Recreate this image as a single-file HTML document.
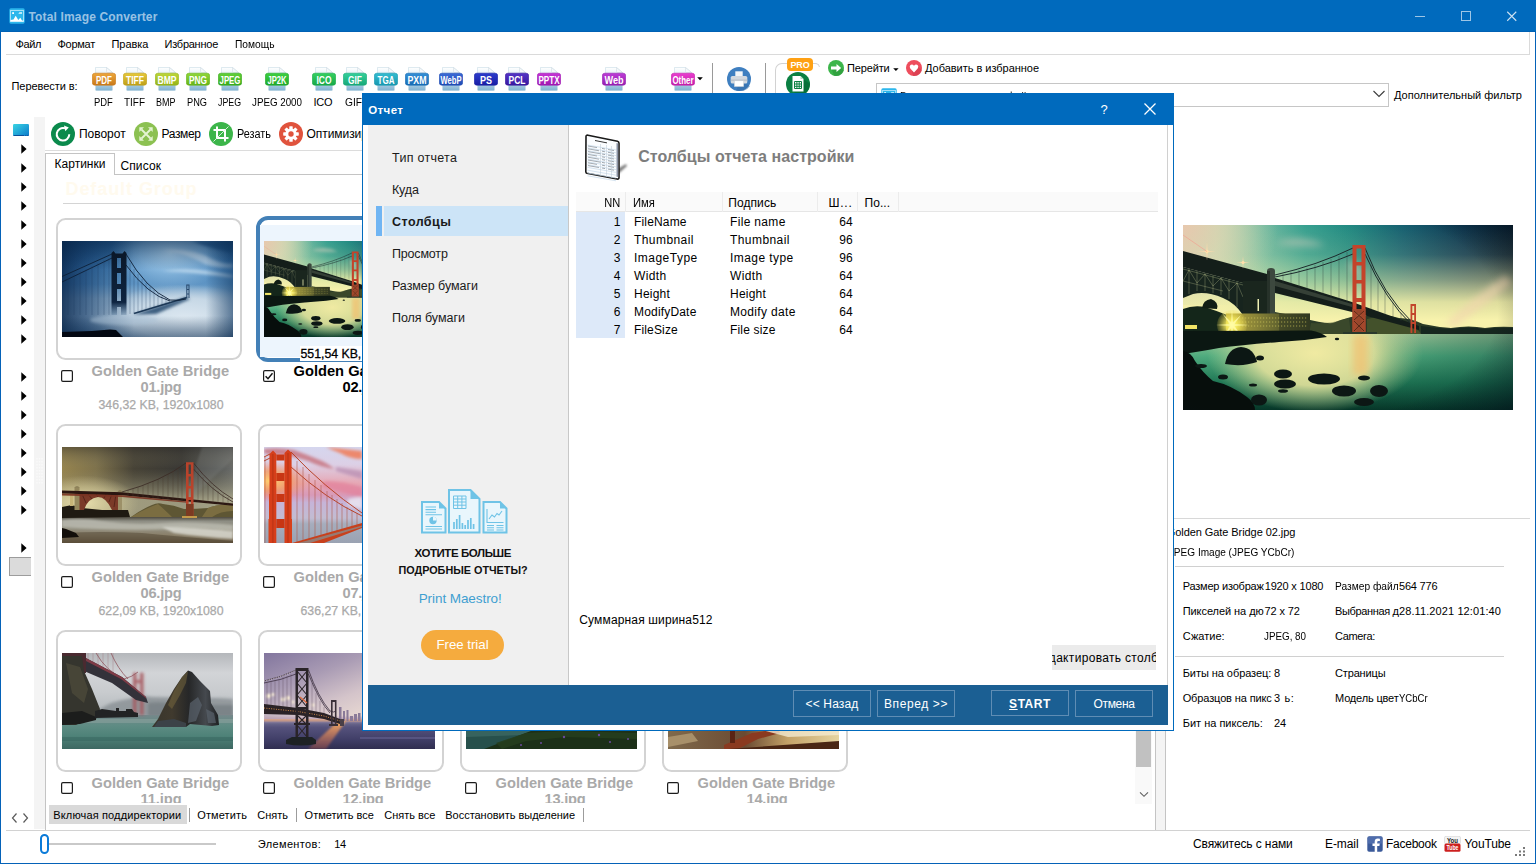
<!DOCTYPE html>
<html lang="ru"><head><meta charset="utf-8"><title>Total Image Converter</title>
<style>
html,body{margin:0;padding:0}
body{width:1536px;height:864px;overflow:hidden;background:#fff;position:relative;font-family:'Liberation Sans', sans-serif;font-size:11px;color:#000}
div,span.t,svg{position:absolute}
div{box-sizing:border-box}
span.t{white-space:nowrap}
svg text{font-family:'Liberation Sans', sans-serif}
</style></head><body>
<div style="left:0px;top:0px;width:1536px;height:32px;background:#006abd;"></div>
<div style="left:0px;top:31px;width:1536px;height:1px;background:#0061b4;"></div>
<div style="left:0px;top:32px;width:1px;height:832px;background:#0462b8;"></div>
<div style="left:1535px;top:32px;width:1px;height:832px;background:#0462b8;"></div>
<div style="left:0px;top:863px;width:1536px;height:1px;background:#0462b8;"></div>
<svg style="left:9px;top:8px" width="16" height="16" viewBox="0 0 16 16"><rect x=".3" y=".3" width="15.400" height="15.400" rx="1.600" fill="#2db7ec"/><rect x="1.500" y="2.500" width="13" height="11" fill="none" stroke="#a6dff6" stroke-width="1"/><path d="M1.500 13.500 V12 L4.500 11.500 L6.700 7.700 L9.300 12 L11.300 9.800 L13.200 12.800 L14.500 12 V13.500Z" fill="#fff"/><rect x="3.200" y="4.200" width="1.800" height="1.800" fill="#fff"/><path d="M9.300 5.800 L10.500 4.300 H13 V5.800Z" fill="#e6f6fd"/></svg>
<span class="t" style="top:8.5px;font-size:12px;line-height:16px;left:28.5px;font-weight:bold;color:rgba(255,255,255,.6);letter-spacing:0.152px;">Total Image Converter</span>
<svg style="left:1409px;top:6px" width="116" height="20" viewBox="0 0 116 20"><g stroke="#fff" stroke-opacity=".8" fill="none"><path d="M6 10.500 H16" stroke-width="1" stroke-opacity=".62"/><rect x="52.500" y="5.500" width="9" height="9" stroke-width="1" stroke-opacity=".62"/><path d="M98.250 5.750 L107.250 14.750 M107.250 5.750 L98.250 14.750" stroke-width="1.100"/></g></svg>
<span class="t" style="top:36.3px;font-size:11px;line-height:16px;left:15.5px;letter-spacing:-0.387px;">Файл</span>
<span class="t" style="top:36.3px;font-size:11px;line-height:16px;left:57.5px;letter-spacing:-0.263px;">Формат</span>
<span class="t" style="top:36.3px;font-size:11px;line-height:16px;left:111.5px;letter-spacing:-0.062px;">Правка</span>
<span class="t" style="top:36.3px;font-size:11px;line-height:16px;left:164.5px;letter-spacing:-0.25px;">Избранное</span>
<span class="t" style="top:36.3px;font-size:11px;line-height:16px;left:234.5px;transform:scaleX(0.9294);transform-origin:left center;">Помощь</span>
<div style="left:6px;top:54px;width:1524px;height:1px;background:#dadada;"></div>
<div style="left:1529px;top:32px;width:1px;height:23px;background:#dadada;"></div>
<span class="t" style="top:78.2px;font-size:11px;line-height:16px;left:11.5px;letter-spacing:-0.062px;">Перевести в:</span>
<svg style="left:92px;top:67px" width="24" height="24" viewBox="0 0 24 24"><defs><linearGradient id="f0p" x1="0" y1="0" x2="0" y2="1"><stop offset="0" stop-color="#ffffff"/><stop offset=".45" stop-color="#d6e8f2"/><stop offset="1" stop-color="#7fb2d2"/></linearGradient><linearGradient id="f0b" x1="0" y1="0" x2="0" y2="1"><stop offset="0" stop-color="#eda63a"/><stop offset="1" stop-color="#c9791a"/></linearGradient></defs><path d="M3.500 .500 H14.500 L20.500 5.500 V22.500 Q20.500 23.700 19.300 23.700 H4.700 Q3.500 23.700 3.500 22.500Z" fill="url(#f0p)" stroke="#c8dbe6" stroke-width=".6"/><path d="M14.500 .500 L20.500 5.500 H15.500 Q14.500 5.500 14.500 4.500Z" fill="#f4f7fa" stroke="#c9d6de" stroke-width=".5"/><rect x=".300" y="6.200" width="23.400" height="12" rx="2.600" fill="url(#f0b)" stroke="#c9791a" stroke-width=".6"/><text x="12" y="16.700" text-anchor="middle" font-size="11" font-weight="bold" fill="#fff" textLength="16" lengthAdjust="spacingAndGlyphs">PDF</text></svg>
<span class="t" style="top:94.0px;font-size:11px;line-height:16px;left:93.7px;transform:scaleX(0.8545);transform-origin:left center;">PDF</span>
<svg style="left:123px;top:67px" width="24" height="24" viewBox="0 0 24 24"><defs><linearGradient id="f1p" x1="0" y1="0" x2="0" y2="1"><stop offset="0" stop-color="#ffffff"/><stop offset=".45" stop-color="#d6e8f2"/><stop offset="1" stop-color="#7fb2d2"/></linearGradient><linearGradient id="f1b" x1="0" y1="0" x2="0" y2="1"><stop offset="0" stop-color="#e6c83a"/><stop offset="1" stop-color="#bf9f18"/></linearGradient></defs><path d="M3.500 .500 H14.500 L20.500 5.500 V22.500 Q20.500 23.700 19.300 23.700 H4.700 Q3.500 23.700 3.500 22.500Z" fill="url(#f1p)" stroke="#c8dbe6" stroke-width=".6"/><path d="M14.500 .500 L20.500 5.500 H15.500 Q14.500 5.500 14.500 4.500Z" fill="#f4f7fa" stroke="#c9d6de" stroke-width=".5"/><rect x=".300" y="6.200" width="23.400" height="12" rx="2.600" fill="url(#f1b)" stroke="#bf9f18" stroke-width=".6"/><text x="12" y="16.700" text-anchor="middle" font-size="11" font-weight="bold" fill="#fff" textLength="18" lengthAdjust="spacingAndGlyphs">TIFF</text></svg>
<span class="t" style="top:94.0px;font-size:11px;line-height:16px;left:124px;transform:scaleX(0.9044);transform-origin:left center;">TIFF</span>
<svg style="left:155px;top:67px" width="24" height="24" viewBox="0 0 24 24"><defs><linearGradient id="f2p" x1="0" y1="0" x2="0" y2="1"><stop offset="0" stop-color="#ffffff"/><stop offset=".45" stop-color="#d6e8f2"/><stop offset="1" stop-color="#7fb2d2"/></linearGradient><linearGradient id="f2b" x1="0" y1="0" x2="0" y2="1"><stop offset="0" stop-color="#bdd63a"/><stop offset="1" stop-color="#96b418"/></linearGradient></defs><path d="M3.500 .500 H14.500 L20.500 5.500 V22.500 Q20.500 23.700 19.300 23.700 H4.700 Q3.500 23.700 3.500 22.500Z" fill="url(#f2p)" stroke="#c8dbe6" stroke-width=".6"/><path d="M14.500 .500 L20.500 5.500 H15.500 Q14.500 5.500 14.500 4.500Z" fill="#f4f7fa" stroke="#c9d6de" stroke-width=".5"/><rect x=".300" y="6.200" width="23.400" height="12" rx="2.600" fill="url(#f2b)" stroke="#96b418" stroke-width=".6"/><text x="12" y="16.700" text-anchor="middle" font-size="11" font-weight="bold" fill="#fff" textLength="19" lengthAdjust="spacingAndGlyphs">BMP</text></svg>
<span class="t" style="top:94.0px;font-size:11px;line-height:16px;left:155.5px;transform:scaleX(0.8178);transform-origin:left center;">BMP</span>
<svg style="left:186px;top:67px" width="24" height="24" viewBox="0 0 24 24"><defs><linearGradient id="f3p" x1="0" y1="0" x2="0" y2="1"><stop offset="0" stop-color="#ffffff"/><stop offset=".45" stop-color="#d6e8f2"/><stop offset="1" stop-color="#7fb2d2"/></linearGradient><linearGradient id="f3b" x1="0" y1="0" x2="0" y2="1"><stop offset="0" stop-color="#8fd63a"/><stop offset="1" stop-color="#66b418"/></linearGradient></defs><path d="M3.500 .500 H14.500 L20.500 5.500 V22.500 Q20.500 23.700 19.300 23.700 H4.700 Q3.500 23.700 3.500 22.500Z" fill="url(#f3p)" stroke="#c8dbe6" stroke-width=".6"/><path d="M14.500 .500 L20.500 5.500 H15.500 Q14.500 5.500 14.500 4.500Z" fill="#f4f7fa" stroke="#c9d6de" stroke-width=".5"/><rect x=".300" y="6.200" width="23.400" height="12" rx="2.600" fill="url(#f3b)" stroke="#66b418" stroke-width=".6"/><text x="12" y="16.700" text-anchor="middle" font-size="11" font-weight="bold" fill="#fff" textLength="18" lengthAdjust="spacingAndGlyphs">PNG</text></svg>
<span class="t" style="top:94.0px;font-size:11px;line-height:16px;left:186.5px;transform:scaleX(0.8388);transform-origin:left center;">PNG</span>
<svg style="left:218px;top:67px" width="24" height="24" viewBox="0 0 24 24"><defs><linearGradient id="f4p" x1="0" y1="0" x2="0" y2="1"><stop offset="0" stop-color="#ffffff"/><stop offset=".45" stop-color="#d6e8f2"/><stop offset="1" stop-color="#7fb2d2"/></linearGradient><linearGradient id="f4b" x1="0" y1="0" x2="0" y2="1"><stop offset="0" stop-color="#62d03a"/><stop offset="1" stop-color="#38aa1c"/></linearGradient></defs><path d="M3.500 .500 H14.500 L20.500 5.500 V22.500 Q20.500 23.700 19.300 23.700 H4.700 Q3.500 23.700 3.500 22.500Z" fill="url(#f4p)" stroke="#c8dbe6" stroke-width=".6"/><path d="M14.500 .500 L20.500 5.500 H15.500 Q14.500 5.500 14.500 4.500Z" fill="#f4f7fa" stroke="#c9d6de" stroke-width=".5"/><rect x=".300" y="6.200" width="23.400" height="12" rx="2.600" fill="url(#f4b)" stroke="#38aa1c" stroke-width=".6"/><text x="12" y="16.700" text-anchor="middle" font-size="11" font-weight="bold" fill="#fff" textLength="21" lengthAdjust="spacingAndGlyphs">JPEG</text></svg>
<span class="t" style="top:94.0px;font-size:11px;line-height:16px;left:218px;transform:scaleX(0.8004);transform-origin:left center;">JPEG</span>
<svg style="left:265px;top:67px" width="24" height="24" viewBox="0 0 24 24"><defs><linearGradient id="f5p" x1="0" y1="0" x2="0" y2="1"><stop offset="0" stop-color="#ffffff"/><stop offset=".45" stop-color="#d6e8f2"/><stop offset="1" stop-color="#7fb2d2"/></linearGradient><linearGradient id="f5b" x1="0" y1="0" x2="0" y2="1"><stop offset="0" stop-color="#3ed040"/><stop offset="1" stop-color="#1fa82c"/></linearGradient></defs><path d="M3.500 .500 H14.500 L20.500 5.500 V22.500 Q20.500 23.700 19.300 23.700 H4.700 Q3.500 23.700 3.500 22.500Z" fill="url(#f5p)" stroke="#c8dbe6" stroke-width=".6"/><path d="M14.500 .500 L20.500 5.500 H15.500 Q14.500 5.500 14.500 4.500Z" fill="#f4f7fa" stroke="#c9d6de" stroke-width=".5"/><rect x=".300" y="6.200" width="23.400" height="12" rx="2.600" fill="url(#f5b)" stroke="#1fa82c" stroke-width=".6"/><text x="12" y="16.700" text-anchor="middle" font-size="11" font-weight="bold" fill="#fff" textLength="19" lengthAdjust="spacingAndGlyphs">JP2K</text></svg>
<span class="t" style="top:94.0px;font-size:11px;line-height:16px;left:252px;transform:scaleX(0.8886);transform-origin:left center;">JPEG 2000</span>
<svg style="left:312px;top:67px" width="24" height="24" viewBox="0 0 24 24"><defs><linearGradient id="f6p" x1="0" y1="0" x2="0" y2="1"><stop offset="0" stop-color="#ffffff"/><stop offset=".45" stop-color="#d6e8f2"/><stop offset="1" stop-color="#7fb2d2"/></linearGradient><linearGradient id="f6b" x1="0" y1="0" x2="0" y2="1"><stop offset="0" stop-color="#34d060"/><stop offset="1" stop-color="#18a848"/></linearGradient></defs><path d="M3.500 .500 H14.500 L20.500 5.500 V22.500 Q20.500 23.700 19.300 23.700 H4.700 Q3.500 23.700 3.500 22.500Z" fill="url(#f6p)" stroke="#c8dbe6" stroke-width=".6"/><path d="M14.500 .500 L20.500 5.500 H15.500 Q14.500 5.500 14.500 4.500Z" fill="#f4f7fa" stroke="#c9d6de" stroke-width=".5"/><rect x=".300" y="6.200" width="23.400" height="12" rx="2.600" fill="url(#f6b)" stroke="#18a848" stroke-width=".6"/><text x="12" y="16.700" text-anchor="middle" font-size="11" font-weight="bold" fill="#fff" textLength="15" lengthAdjust="spacingAndGlyphs">ICO</text></svg>
<span class="t" style="top:94.0px;font-size:11px;line-height:16px;left:313.5px;letter-spacing:-0.188px;">ICO</span>
<svg style="left:343px;top:67px" width="24" height="24" viewBox="0 0 24 24"><defs><linearGradient id="f7p" x1="0" y1="0" x2="0" y2="1"><stop offset="0" stop-color="#ffffff"/><stop offset=".45" stop-color="#d6e8f2"/><stop offset="1" stop-color="#7fb2d2"/></linearGradient><linearGradient id="f7b" x1="0" y1="0" x2="0" y2="1"><stop offset="0" stop-color="#34d09a"/><stop offset="1" stop-color="#18a878"/></linearGradient></defs><path d="M3.500 .500 H14.500 L20.500 5.500 V22.500 Q20.500 23.700 19.300 23.700 H4.700 Q3.500 23.700 3.500 22.500Z" fill="url(#f7p)" stroke="#c8dbe6" stroke-width=".6"/><path d="M14.500 .500 L20.500 5.500 H15.500 Q14.500 5.500 14.500 4.500Z" fill="#f4f7fa" stroke="#c9d6de" stroke-width=".5"/><rect x=".300" y="6.200" width="23.400" height="12" rx="2.600" fill="url(#f7b)" stroke="#18a878" stroke-width=".6"/><text x="12" y="16.700" text-anchor="middle" font-size="11" font-weight="bold" fill="#fff" textLength="14" lengthAdjust="spacingAndGlyphs">GIF</text></svg>
<span class="t" style="top:94.0px;font-size:11px;line-height:16px;left:345px;transform:scaleX(0.9267);transform-origin:left center;">GIF</span>
<svg style="left:374px;top:67px" width="24" height="24" viewBox="0 0 24 24"><defs><linearGradient id="f8p" x1="0" y1="0" x2="0" y2="1"><stop offset="0" stop-color="#ffffff"/><stop offset=".45" stop-color="#d6e8f2"/><stop offset="1" stop-color="#7fb2d2"/></linearGradient><linearGradient id="f8b" x1="0" y1="0" x2="0" y2="1"><stop offset="0" stop-color="#34bcd0"/><stop offset="1" stop-color="#1898b0"/></linearGradient></defs><path d="M3.500 .500 H14.500 L20.500 5.500 V22.500 Q20.500 23.700 19.300 23.700 H4.700 Q3.500 23.700 3.500 22.500Z" fill="url(#f8p)" stroke="#c8dbe6" stroke-width=".6"/><path d="M14.500 .500 L20.500 5.500 H15.500 Q14.500 5.500 14.500 4.500Z" fill="#f4f7fa" stroke="#c9d6de" stroke-width=".5"/><rect x=".300" y="6.200" width="23.400" height="12" rx="2.600" fill="url(#f8b)" stroke="#1898b0" stroke-width=".6"/><text x="12" y="16.700" text-anchor="middle" font-size="11" font-weight="bold" fill="#fff" textLength="17" lengthAdjust="spacingAndGlyphs">TGA</text></svg>
<span class="t" style="top:94.0px;font-size:11px;line-height:16px;left:375px;transform:scaleX(0.884);transform-origin:left center;">TGA</span>
<svg style="left:405px;top:67px" width="24" height="24" viewBox="0 0 24 24"><defs><linearGradient id="f9p" x1="0" y1="0" x2="0" y2="1"><stop offset="0" stop-color="#ffffff"/><stop offset=".45" stop-color="#d6e8f2"/><stop offset="1" stop-color="#7fb2d2"/></linearGradient><linearGradient id="f9b" x1="0" y1="0" x2="0" y2="1"><stop offset="0" stop-color="#348fd6"/><stop offset="1" stop-color="#186cb4"/></linearGradient></defs><path d="M3.500 .500 H14.500 L20.500 5.500 V22.500 Q20.500 23.700 19.300 23.700 H4.700 Q3.500 23.700 3.500 22.500Z" fill="url(#f9p)" stroke="#c8dbe6" stroke-width=".6"/><path d="M14.500 .500 L20.500 5.500 H15.500 Q14.500 5.500 14.500 4.500Z" fill="#f4f7fa" stroke="#c9d6de" stroke-width=".5"/><rect x=".300" y="6.200" width="23.400" height="12" rx="2.600" fill="url(#f9b)" stroke="#186cb4" stroke-width=".6"/><text x="12" y="16.700" text-anchor="middle" font-size="11" font-weight="bold" fill="#fff" textLength="19" lengthAdjust="spacingAndGlyphs">PXM</text></svg>
<span class="t" style="top:94.0px;font-size:11px;line-height:16px;left:406px;transform:scaleX(0.8807);transform-origin:left center;">PXM</span>
<svg style="left:439px;top:67px" width="24" height="24" viewBox="0 0 24 24"><defs><linearGradient id="f10p" x1="0" y1="0" x2="0" y2="1"><stop offset="0" stop-color="#ffffff"/><stop offset=".45" stop-color="#d6e8f2"/><stop offset="1" stop-color="#7fb2d2"/></linearGradient><linearGradient id="f10b" x1="0" y1="0" x2="0" y2="1"><stop offset="0" stop-color="#3a6ad6"/><stop offset="1" stop-color="#204cb4"/></linearGradient></defs><path d="M3.500 .500 H14.500 L20.500 5.500 V22.500 Q20.500 23.700 19.300 23.700 H4.700 Q3.500 23.700 3.500 22.500Z" fill="url(#f10p)" stroke="#c8dbe6" stroke-width=".6"/><path d="M14.500 .500 L20.500 5.500 H15.500 Q14.500 5.500 14.500 4.500Z" fill="#f4f7fa" stroke="#c9d6de" stroke-width=".5"/><rect x=".300" y="6.200" width="23.400" height="12" rx="2.600" fill="url(#f10b)" stroke="#204cb4" stroke-width=".6"/><text x="12" y="16.700" text-anchor="middle" font-size="11" font-weight="bold" fill="#fff" textLength="21" lengthAdjust="spacingAndGlyphs">WebP</text></svg>
<span class="t" style="top:94.0px;font-size:11px;line-height:16px;left:438px;transform:scaleX(0.9071);transform-origin:left center;">WebP</span>
<svg style="left:474px;top:67px" width="24" height="24" viewBox="0 0 24 24"><defs><linearGradient id="f11p" x1="0" y1="0" x2="0" y2="1"><stop offset="0" stop-color="#ffffff"/><stop offset=".45" stop-color="#d6e8f2"/><stop offset="1" stop-color="#7fb2d2"/></linearGradient><linearGradient id="f11b" x1="0" y1="0" x2="0" y2="1"><stop offset="0" stop-color="#2c3ccc"/><stop offset="1" stop-color="#181ea4"/></linearGradient></defs><path d="M3.500 .500 H14.500 L20.500 5.500 V22.500 Q20.500 23.700 19.300 23.700 H4.700 Q3.500 23.700 3.500 22.500Z" fill="url(#f11p)" stroke="#c8dbe6" stroke-width=".6"/><path d="M14.500 .500 L20.500 5.500 H15.500 Q14.500 5.500 14.500 4.500Z" fill="#f4f7fa" stroke="#c9d6de" stroke-width=".5"/><rect x=".300" y="6.200" width="23.400" height="12" rx="2.600" fill="url(#f11b)" stroke="#181ea4" stroke-width=".6"/><text x="12" y="16.700" text-anchor="middle" font-size="11" font-weight="bold" fill="#fff" textLength="12" lengthAdjust="spacingAndGlyphs">PS</text></svg>
<span class="t" style="top:94.0px;font-size:11px;line-height:16px;left:480px;transform:scaleX(0.817);transform-origin:left center;">PS</span>
<svg style="left:505px;top:67px" width="24" height="24" viewBox="0 0 24 24"><defs><linearGradient id="f12p" x1="0" y1="0" x2="0" y2="1"><stop offset="0" stop-color="#ffffff"/><stop offset=".45" stop-color="#d6e8f2"/><stop offset="1" stop-color="#7fb2d2"/></linearGradient><linearGradient id="f12b" x1="0" y1="0" x2="0" y2="1"><stop offset="0" stop-color="#5434c6"/><stop offset="1" stop-color="#38189e"/></linearGradient></defs><path d="M3.500 .500 H14.500 L20.500 5.500 V22.500 Q20.500 23.700 19.300 23.700 H4.700 Q3.500 23.700 3.500 22.500Z" fill="url(#f12p)" stroke="#c8dbe6" stroke-width=".6"/><path d="M14.500 .500 L20.500 5.500 H15.500 Q14.500 5.500 14.500 4.500Z" fill="#f4f7fa" stroke="#c9d6de" stroke-width=".5"/><rect x=".300" y="6.200" width="23.400" height="12" rx="2.600" fill="url(#f12b)" stroke="#38189e" stroke-width=".6"/><text x="12" y="16.700" text-anchor="middle" font-size="11" font-weight="bold" fill="#fff" textLength="17" lengthAdjust="spacingAndGlyphs">PCL</text></svg>
<span class="t" style="top:94.0px;font-size:11px;line-height:16px;left:507px;transform:scaleX(0.8876);transform-origin:left center;">PCL</span>
<svg style="left:537px;top:67px" width="24" height="24" viewBox="0 0 24 24"><defs><linearGradient id="f13p" x1="0" y1="0" x2="0" y2="1"><stop offset="0" stop-color="#ffffff"/><stop offset=".45" stop-color="#d6e8f2"/><stop offset="1" stop-color="#7fb2d2"/></linearGradient><linearGradient id="f13b" x1="0" y1="0" x2="0" y2="1"><stop offset="0" stop-color="#c634d6"/><stop offset="1" stop-color="#9e18b0"/></linearGradient></defs><path d="M3.500 .500 H14.500 L20.500 5.500 V22.500 Q20.500 23.700 19.300 23.700 H4.700 Q3.500 23.700 3.500 22.500Z" fill="url(#f13p)" stroke="#c8dbe6" stroke-width=".6"/><path d="M14.500 .500 L20.500 5.500 H15.500 Q14.500 5.500 14.500 4.500Z" fill="#f4f7fa" stroke="#c9d6de" stroke-width=".5"/><rect x=".300" y="6.200" width="23.400" height="12" rx="2.600" fill="url(#f13b)" stroke="#9e18b0" stroke-width=".6"/><text x="12" y="16.700" text-anchor="middle" font-size="11" font-weight="bold" fill="#fff" textLength="21" lengthAdjust="spacingAndGlyphs">PPTX</text></svg>
<span class="t" style="top:94.0px;font-size:11px;line-height:16px;left:537px;transform:scaleX(0.87);transform-origin:left center;">PPTX</span>
<svg style="left:602px;top:67px" width="24" height="24" viewBox="0 0 24 24"><defs><linearGradient id="f14p" x1="0" y1="0" x2="0" y2="1"><stop offset="0" stop-color="#ffffff"/><stop offset=".45" stop-color="#d6e8f2"/><stop offset="1" stop-color="#7fb2d2"/></linearGradient><linearGradient id="f14b" x1="0" y1="0" x2="0" y2="1"><stop offset="0" stop-color="#bc3cd6"/><stop offset="1" stop-color="#9620b0"/></linearGradient></defs><path d="M3.500 .500 H14.500 L20.500 5.500 V22.500 Q20.500 23.700 19.300 23.700 H4.700 Q3.500 23.700 3.500 22.500Z" fill="url(#f14p)" stroke="#c8dbe6" stroke-width=".6"/><path d="M14.500 .500 L20.500 5.500 H15.500 Q14.500 5.500 14.500 4.500Z" fill="#f4f7fa" stroke="#c9d6de" stroke-width=".5"/><rect x=".300" y="6.200" width="23.400" height="12" rx="2.600" fill="url(#f14b)" stroke="#9620b0" stroke-width=".6"/><text x="12" y="16.700" text-anchor="middle" font-size="11" font-weight="bold" fill="#fff" textLength="19" lengthAdjust="spacingAndGlyphs">Web</text></svg>
<span class="t" style="top:94.0px;font-size:11px;line-height:16px;left:604px;transform:scaleX(0.9366);transform-origin:left center;">Web</span>
<svg style="left:671px;top:67px" width="24" height="24" viewBox="0 0 24 24"><defs><linearGradient id="f15p" x1="0" y1="0" x2="0" y2="1"><stop offset="0" stop-color="#ffffff"/><stop offset=".45" stop-color="#d6e8f2"/><stop offset="1" stop-color="#7fb2d2"/></linearGradient><linearGradient id="f15b" x1="0" y1="0" x2="0" y2="1"><stop offset="0" stop-color="#ea3ed0"/><stop offset="1" stop-color="#c21ea8"/></linearGradient></defs><path d="M3.500 .500 H14.500 L20.500 5.500 V22.500 Q20.500 23.700 19.300 23.700 H4.700 Q3.500 23.700 3.500 22.500Z" fill="url(#f15p)" stroke="#c8dbe6" stroke-width=".6"/><path d="M14.500 .500 L20.500 5.500 H15.500 Q14.500 5.500 14.500 4.500Z" fill="#f4f7fa" stroke="#c9d6de" stroke-width=".5"/><rect x=".300" y="6.200" width="23.400" height="12" rx="2.600" fill="url(#f15b)" stroke="#c21ea8" stroke-width=".6"/><text x="12" y="16.700" text-anchor="middle" font-size="11" font-weight="bold" fill="#fff" textLength="21" lengthAdjust="spacingAndGlyphs">Other</text></svg>
<span class="t" style="top:94.0px;font-size:11px;line-height:16px;left:670px;letter-spacing:0.097px;">Other</span>
<svg style="left:697px;top:77px" width="6" height="4" viewBox="0 0 6 4"><path d="M.2 .2 H5.800 L3 3.300Z" fill="#000"/></svg>
<div style="left:712px;top:63px;width:1px;height:40px;background:#9a9a9a;"></div>
<div style="left:765px;top:63px;width:1px;height:40px;background:#9a9a9a;"></div>
<svg style="left:727px;top:67px" width="24" height="24" viewBox="0 0 24 24"><circle cx="12" cy="12" r="12" fill="#3f7fc0"/><path d="M14 14 L23 19 A12 12 0 0 1 9 23.600Z" fill="#346da8" opacity=".55"/><rect x="8.300" y="4.300" width="7.400" height="5.200" fill="#f4f6f8"/><rect x="3.700" y="9" width="16.600" height="7.600" rx="1.600" fill="#d4d9df"/><rect x="3.700" y="12.600" width="16.600" height="1.100" fill="#b4bbc3"/><rect x="7.300" y="13.800" width="9.400" height="5.800" fill="#fff" stroke="#c3c9d0" stroke-width=".5"/></svg>
<div style="left:775px;top:63px;width:45px;height:50px;border:1px solid #d2d2d2;border-radius:7px 5px 0 0;border-bottom:0"></div>
<div style="left:818px;top:67px;width:3px;height:40px;background:#fff;"></div>
<svg style="left:786px;top:72px" width="24" height="24" viewBox="0 0 24 24"><circle cx="12" cy="12" r="12" fill="#0b8043"/><path d="M16 6 L24 12 A12 12 0 0 1 12 24 L7 19Z" fill="#086a36" opacity=".7"/><path d="M6.500 4 H14.500 L17.500 7 V19.500 H6.500Z" fill="#fff"/><path d="M14.500 4 V7 H17.500Z" fill="#b9dcc6"/><path d="M8.500 9.500 H15.500 V16.500 H8.500Z M8.500 12 H15.500 M8.500 14.300 H15.500 M10.900 9.500 V16.500 M13.200 9.500 V16.500" fill="none" stroke="#0b8043" stroke-width="1"/></svg>
<div style="left:787px;top:58px;width:26px;height:13px;background:#ffa114;border-radius:4px"></div>
<span class="t" style="top:58.6px;font-size:9px;line-height:12px;left:800px;font-weight:bold;color:#fff;letter-spacing:-0.172px;transform:translateX(-50%);">PRO</span>
<svg style="left:828px;top:60px" width="16" height="16" viewBox="0 0 16 16"><circle cx="8" cy="8" r="8" fill="#3cb54a"/><path d="M11 6 L16 10 A8 8 0 0 1 6 15.700 L4 10Z" fill="#2c9a3a" opacity=".7"/><path d="M3 6.500 H8.500 V4 L13.200 8 L8.500 12 V9.500 H3Z" fill="#fff"/></svg>
<span class="t" style="top:60.3px;font-size:11px;line-height:16px;left:847px;letter-spacing:-0.142px;">Перейти</span>
<svg style="left:893px;top:67.5px" width="6" height="4" viewBox="0 0 6 4"><path d="M.2 .2 H5.600 L2.900 3.100Z" fill="#000"/></svg>
<svg style="left:906px;top:60px" width="16" height="16" viewBox="0 0 16 16"><circle cx="8" cy="8" r="8" fill="#ee4d5d"/><path d="M11 6 L16 10 A8 8 0 0 1 7 15.900 L6 11Z" fill="#d23a4c" opacity=".6"/><path d="M8 12.600 L4.300 8.600 Q3 6.600 4.400 5.100 Q6.200 3.700 8 5.700 Q9.800 3.700 11.600 5.100 Q13 6.600 11.700 8.600Z" fill="#fff"/></svg>
<span class="t" style="top:60.3px;font-size:11px;line-height:16px;left:925px;letter-spacing:-0.028px;">Добавить в избранное</span>
<span class="t" style="top:88.8px;font-size:11px;line-height:16px;left:828px;letter-spacing:-0.002px;">Фильтр:</span>
<div style="left:876px;top:83px;width:513px;height:24px;border:1px solid #c6c6c6;background:#fff"></div>
<svg style="left:881px;top:88px" width="16" height="16" viewBox="0 0 16 16"><rect x=".3" y=".3" width="15.400" height="15.400" rx="1.600" fill="#2db7ec"/><rect x="1.500" y="2.500" width="13" height="11" fill="none" stroke="#a6dff6" stroke-width="1"/><path d="M1.500 13.500 V12 L4.500 11.500 L6.700 7.700 L9.300 12 L11.300 9.800 L13.200 12.800 L14.500 12 V13.500Z" fill="#fff"/><rect x="3.200" y="4.200" width="1.800" height="1.800" fill="#fff"/><path d="M9.300 5.800 L10.500 4.300 H13 V5.800Z" fill="#e6f6fd"/></svg>
<span class="t" style="top:87.5px;font-size:11px;line-height:16px;left:900px;transform:scaleX(0.9293);transform-origin:left center;">Все поддерживаемые файлы</span>
<svg style="left:1372px;top:90px" width="14" height="8" viewBox="0 0 14 8"><path d="M1.500 1 L7 6.500 L12.500 1" fill="none" stroke="#3c3c3c" stroke-width="1.100"/></svg>
<span class="t" style="top:86.8px;font-size:11px;line-height:16px;left:1394px;letter-spacing:0.009px;">Дополнительный фильтр</span>
<svg style="left:13px;top:124px" width="16" height="12" viewBox="0 0 16 12"><defs><linearGradient id="mon" x1="0" y1="0" x2="1" y2="1"><stop offset="0" stop-color="#3ad4e2"/><stop offset=".5" stop-color="#22a8d8"/><stop offset="1" stop-color="#0c78c8"/></linearGradient></defs><rect x="0" y="0" width="16" height="12" rx="1.200" fill="url(#mon)"/><path d="M.5 11.500 H11 M12.300 11.500 H13.300 M14.300 11.500 H15.500" stroke="#0a4f9a" stroke-width="1"/></svg>
<svg style="left:20.7px;top:143.6px" width="6" height="10" viewBox="0 0 6 10"><path d="M.3 .3 L5.600 5 L.3 9.700Z" fill="#000"/></svg>
<svg style="left:20.7px;top:162.6px" width="6" height="10" viewBox="0 0 6 10"><path d="M.3 .3 L5.600 5 L.3 9.700Z" fill="#000"/></svg>
<svg style="left:20.7px;top:181.6px" width="6" height="10" viewBox="0 0 6 10"><path d="M.3 .3 L5.600 5 L.3 9.700Z" fill="#000"/></svg>
<svg style="left:20.7px;top:200.6px" width="6" height="10" viewBox="0 0 6 10"><path d="M.3 .3 L5.600 5 L.3 9.700Z" fill="#000"/></svg>
<svg style="left:20.7px;top:219.6px" width="6" height="10" viewBox="0 0 6 10"><path d="M.3 .3 L5.600 5 L.3 9.700Z" fill="#000"/></svg>
<svg style="left:20.7px;top:238.6px" width="6" height="10" viewBox="0 0 6 10"><path d="M.3 .3 L5.600 5 L.3 9.700Z" fill="#000"/></svg>
<svg style="left:20.7px;top:257.6px" width="6" height="10" viewBox="0 0 6 10"><path d="M.3 .3 L5.600 5 L.3 9.700Z" fill="#000"/></svg>
<svg style="left:20.7px;top:276.6px" width="6" height="10" viewBox="0 0 6 10"><path d="M.3 .3 L5.600 5 L.3 9.700Z" fill="#000"/></svg>
<svg style="left:20.7px;top:295.6px" width="6" height="10" viewBox="0 0 6 10"><path d="M.3 .3 L5.600 5 L.3 9.700Z" fill="#000"/></svg>
<svg style="left:20.7px;top:314.6px" width="6" height="10" viewBox="0 0 6 10"><path d="M.3 .3 L5.600 5 L.3 9.700Z" fill="#000"/></svg>
<svg style="left:20.7px;top:333.6px" width="6" height="10" viewBox="0 0 6 10"><path d="M.3 .3 L5.600 5 L.3 9.700Z" fill="#000"/></svg>
<svg style="left:20.7px;top:371.6px" width="6" height="10" viewBox="0 0 6 10"><path d="M.3 .3 L5.600 5 L.3 9.700Z" fill="#000"/></svg>
<svg style="left:20.7px;top:390.6px" width="6" height="10" viewBox="0 0 6 10"><path d="M.3 .3 L5.600 5 L.3 9.700Z" fill="#000"/></svg>
<svg style="left:20.7px;top:409.6px" width="6" height="10" viewBox="0 0 6 10"><path d="M.3 .3 L5.600 5 L.3 9.700Z" fill="#000"/></svg>
<svg style="left:20.7px;top:428.6px" width="6" height="10" viewBox="0 0 6 10"><path d="M.3 .3 L5.600 5 L.3 9.700Z" fill="#000"/></svg>
<svg style="left:20.7px;top:447.6px" width="6" height="10" viewBox="0 0 6 10"><path d="M.3 .3 L5.600 5 L.3 9.700Z" fill="#000"/></svg>
<svg style="left:20.7px;top:466.6px" width="6" height="10" viewBox="0 0 6 10"><path d="M.3 .3 L5.600 5 L.3 9.700Z" fill="#000"/></svg>
<svg style="left:20.7px;top:485.6px" width="6" height="10" viewBox="0 0 6 10"><path d="M.3 .3 L5.600 5 L.3 9.700Z" fill="#000"/></svg>
<svg style="left:20.7px;top:504.6px" width="6" height="10" viewBox="0 0 6 10"><path d="M.3 .3 L5.600 5 L.3 9.700Z" fill="#000"/></svg>
<svg style="left:20.7px;top:542.6px" width="6" height="10" viewBox="0 0 6 10"><path d="M.3 .3 L5.600 5 L.3 9.700Z" fill="#000"/></svg>
<div style="left:9px;top:557px;width:22px;height:19px;background:#dbdbdb;border:1px solid #9c9c9c;border-right:0"></div>
<svg style="left:11px;top:812px" width="19" height="12" viewBox="0 0 19 12"><path d="M5.500 1.500 L1.500 6 L5.500 10.500 M12.500 1.500 L16.500 6 L12.500 10.500" fill="none" stroke="#5a5a5a" stroke-width="1.200"/></svg>
<div style="left:34px;top:117px;width:11px;height:712px;background:#f4f4f4;"></div>
<svg style="left:36px;top:457px" width="8" height="28" viewBox="0 0 8 28"><path d="M1 1 V27 M3.500 1 V27 M6 1 V27" stroke="#fafafa" stroke-width="1.200" stroke-dasharray="1.500 1.500"/></svg>
<div style="left:45px;top:153px;width:1px;height:677px;background:#c4c4c4;"></div>
<svg style="left:51px;top:122px" width="24" height="24" viewBox="0 0 24 24"><circle cx="12" cy="12" r="12" fill="#0b8a4c"/><path d="M18.300 12.300 A6.300 6.300 0 1 1 14 6.300" fill="none" stroke="#fff" stroke-width="2"/><path d="M13 3.600 L17.800 5.400 L14.300 9.200Z" fill="#fff"/></svg>
<span class="t" style="top:125.8px;font-size:12px;line-height:16px;left:78.9px;">Поворот</span>
<svg style="left:134px;top:122px" width="24" height="24" viewBox="0 0 24 24"><circle cx="12" cy="12" r="12" fill="#8cc152"/><path d="M7.500 7.500 L16.500 16.500 M16.500 7.500 L7.500 16.500" stroke="#e4f3d2" stroke-width="1.900"/><path transform="rotate(0 12 12)" d="M5.300 5.300 H10 L5.300 10Z" fill="#e4f3d2"/><path transform="rotate(90 12 12)" d="M5.300 5.300 H10 L5.300 10Z" fill="#e4f3d2"/><path transform="rotate(180 12 12)" d="M5.300 5.300 H10 L5.300 10Z" fill="#e4f3d2"/><path transform="rotate(270 12 12)" d="M5.300 5.300 H10 L5.300 10Z" fill="#e4f3d2"/></svg>
<span class="t" style="top:125.8px;font-size:12px;line-height:16px;left:161.5px;letter-spacing:-0.375px;">Размер</span>
<svg style="left:209px;top:122px" width="24" height="24" viewBox="0 0 24 24"><circle cx="12" cy="12" r="12" fill="#3cb54a"/><path d="M8 4.500 V16 H19.500 M4.500 8 H16 V19.500" fill="none" stroke="#fff" stroke-width="2"/><path d="M4.500 19.500 L19.500 4.500" stroke="#e4f5e6" stroke-width=".9"/></svg>
<span class="t" style="top:125.8px;font-size:12px;line-height:16px;left:236.8px;transform:scaleX(0.9055);transform-origin:left center;">Резать</span>
<svg style="left:279px;top:122px" width="24" height="24" viewBox="0 0 24 24"><circle cx="12" cy="12" r="12" fill="#e0533d"/><rect transform="rotate(0 12 12)" x="10.300" y="4.200" width="3.400" height="4" rx=".6" fill="#fff"/><rect transform="rotate(45 12 12)" x="10.300" y="4.200" width="3.400" height="4" rx=".6" fill="#fff"/><rect transform="rotate(90 12 12)" x="10.300" y="4.200" width="3.400" height="4" rx=".6" fill="#fff"/><rect transform="rotate(135 12 12)" x="10.300" y="4.200" width="3.400" height="4" rx=".6" fill="#fff"/><rect transform="rotate(180 12 12)" x="10.300" y="4.200" width="3.400" height="4" rx=".6" fill="#fff"/><rect transform="rotate(225 12 12)" x="10.300" y="4.200" width="3.400" height="4" rx=".6" fill="#fff"/><rect transform="rotate(270 12 12)" x="10.300" y="4.200" width="3.400" height="4" rx=".6" fill="#fff"/><rect transform="rotate(315 12 12)" x="10.300" y="4.200" width="3.400" height="4" rx=".6" fill="#fff"/><circle cx="12" cy="12" r="5.600" fill="#fff"/><circle cx="12" cy="12" r="2.700" fill="#e0533d"/></svg>
<span class="t" style="top:125.8px;font-size:12px;line-height:16px;left:306.6px;letter-spacing:-0.067px;">Оптимизировать</span>
<div style="left:45px;top:150px;width:1111px;height:1px;background:#dcdcdc;"></div>
<div style="left:114px;top:174px;width:1042px;height:1px;background:#c4c4c4;"></div>
<div style="left:45px;top:153px;width:70px;height:22px;border:1px solid #c4c4c4;border-bottom:0;background:#fff"></div>
<span class="t" style="top:155.8px;font-size:12px;line-height:16px;left:54.5px;letter-spacing:0.018px;">Картинки</span>
<span class="t" style="top:158.0px;font-size:12px;line-height:16px;left:120.5px;letter-spacing:0.094px;">Список</span>
<span class="t" style="top:178.0px;font-size:18px;line-height:22px;left:65.5px;font-weight:bold;color:#fffaee;letter-spacing:0.923px;">Default Group</span>
<div style="left:63px;top:203px;width:1068px;height:1px;background:#d4d4d4;"></div>
<div style="left:46px;top:204px;width:1089px;height:599px;overflow:hidden"><div style="left:-46px;top:-204px;width:1536px;height:864px">
<div style="left:55.6px;top:217.8px;width:186.600px;height:142.400px;border:2.800px solid #d3d3d3;border-radius:9.500px;background:#fff"></div>
<svg style="position:absolute;left:62px;top:241px" width="171" height="96" viewBox="0 0 171 96" preserveAspectRatio="none"><defs>
<linearGradient id="p01a" x1="0" y1="0" x2="0" y2="1"><stop offset="0" stop-color="#2d68a0"/><stop offset=".25" stop-color="#4a86bc"/><stop offset=".45" stop-color="#5f95c4"/><stop offset=".6" stop-color="#9dbbd4"/><stop offset=".8" stop-color="#b4cadc"/><stop offset="1" stop-color="#7f9fbc"/></linearGradient>
<radialGradient id="p01b" cx="108" cy="12" r="60" gradientUnits="userSpaceOnUse" gradientTransform="translate(108 12) scale(1 .6) translate(-108 -12)"><stop offset="0" stop-color="#b2d5ee" stop-opacity="1"/><stop offset=".5" stop-color="#98c4e6" stop-opacity=".75"/><stop offset="1" stop-color="#98c4e6" stop-opacity="0"/></radialGradient>
<linearGradient id="p01c" x1="0" y1="0" x2="1" y2="0"><stop offset="0" stop-color="#06244a" stop-opacity=".85"/><stop offset=".14" stop-color="#0b3260" stop-opacity=".62"/><stop offset=".3" stop-color="#0c3562" stop-opacity=".25"/><stop offset=".42" stop-color="#0b2f55" stop-opacity="0"/><stop offset=".84" stop-color="#0b2f55" stop-opacity="0"/><stop offset="1" stop-color="#0d3560" stop-opacity=".6"/></linearGradient>
<radialGradient id="p01d" cx="122" cy="78" r="86" gradientUnits="userSpaceOnUse" gradientTransform="translate(122 78) scale(1 .4) translate(-122 -78)"><stop offset="0" stop-color="#dde8f1" stop-opacity="1"/><stop offset=".6" stop-color="#cbdbe8" stop-opacity=".9"/><stop offset="1" stop-color="#c3d5e4" stop-opacity="0"/></radialGradient>
<linearGradient id="p01e" x1="0" y1="0" x2="0" y2="1"><stop offset=".78" stop-color="#0a2748" stop-opacity="0"/><stop offset="1" stop-color="#0a2748" stop-opacity=".5"/></linearGradient>
<linearGradient id="p01g" x1="0" y1="0" x2="0" y2="1"><stop offset="0" stop-color="#082444" stop-opacity=".55"/><stop offset=".3" stop-color="#082444" stop-opacity="0"/></linearGradient>
<filter id="p01bl" x="-50%" y="-50%" width="200%" height="200%"><feGaussianBlur stdDeviation="1.500"/></filter>
<linearGradient id="p01t" x1="0" y1="0" x2="0" y2="1"><stop offset="0" stop-color="#0a1728"/><stop offset=".8" stop-color="#0e2440"/><stop offset="1" stop-color="#34597f" stop-opacity=".3"/></linearGradient>
</defs>
<rect width="171" height="96" fill="url(#p01a)"/>
<rect width="171" height="96" fill="url(#p01b)"/>
<path d="M130 0 H171 V12 Q150 8 130 0Z" fill="#245a90" opacity=".8" filter="url(#p01bl)"/>
<path d="M100 9 Q132 7 150 18 Q164 24 171 22 L171 27 Q150 28 135 19 Q118 11 100 9Z M100 30 Q130 25 171 34 L171 37 Q130 31 100 30Z" fill="#d3e6f4" opacity=".65" filter="url(#p01bl)"/>
<rect width="171" height="96" fill="url(#p01d)"/>
<rect width="171" height="96" fill="url(#p01c)"/>
<rect width="171" height="96" fill="url(#p01e)"/>
<rect width="171" height="96" fill="url(#p01g)"/>
<path d="M70 74 L124 56 L128 58 L94 73Z" fill="#3d5f80" filter="url(#p01bl)"/>
<path d="M72 72.500 L125 56.500" stroke="#1c3856" stroke-width="1.800"/>
<path d="M0 35.500 L50 13 M0 41 L50 17 M64 13 Q84 48 108 59 Q118 60 124 58 M64 24 Q86 54 108 60" stroke="#0e2038" stroke-width=".9" fill="none"/>
<path d="M6 36 V74 M12 33 V74 M18 30 V74 M24 28 V74 M30 25 V74 M36 22 V74 M42 19 V74 M47 17 V74 M68 22 V73 M72 28 V73 M76 33 V72 M80 38 V71 M84 42 V69 M88 46 V68 M92 49 V67 M96 52 V66 M100 55 V65 M104 57 V64" stroke="#1c3a5c" stroke-width=".5" opacity=".6"/>
<path d="M49.500 12 L51.500 10 L53.500 12.500 H60.500 L62.500 10 L64.500 12 V74 H59 V66 H55 V74 H49.500Z M55 17 V27 H59 V17Z M55 32 V43 H59 V32Z M55 48 V60 H59 V48Z" fill="url(#p01t)" fill-rule="evenodd"/>
<path d="M124.300 43.500 H125.300 V57 H124.300Z M126.500 43.500 H127.500 V57 H126.500Z M124.300 43.500 H127.500 V44.500 H124.300Z M124.300 48 H127.500 V49 H124.300Z M124.300 52.500 H127.500 V53.500 H124.300Z" fill="#27486c"/>
<ellipse cx="62" cy="79" rx="34" ry="5" fill="#a9c0d4" opacity=".5" filter="url(#p01bl)"/>
<path d="M0 91 L30 90 L48 88.500 L54 89 L61 96 L0 96Z" fill="#030812"/>
</svg>
<svg style="left:61px;top:370px" width="12" height="12" viewBox="0 0 12 12"><rect x=".6" y=".6" width="10.800" height="10.800" rx="1.300" fill="#fff" stroke="#1c1c1c" stroke-width="1.200"/></svg>
<span class="t" style="top:362.8px;font-size:14.67px;line-height:17px;left:160.4px;font-weight:bold;color:#a9a9a9;letter-spacing:-0.001px;transform:translateX(-50%);">Golden Gate Bridge</span>
<span class="t" style="top:378.8px;font-size:14.67px;line-height:17px;left:161px;font-weight:bold;color:#a9a9a9;letter-spacing:-0.227px;transform:translateX(-50%);">01.jpg</span>
<span class="t" style="top:396.5px;font-size:12.3px;line-height:16px;left:161px;color:#a9a9a9;letter-spacing:-0.006px;transform:translateX(-50%);-webkit-text-stroke:.25px #a9a9a9;">346,32 KB, 1920x1080</span>
<div style="left:255.6px;top:216px;width:190.800px;height:146.200px;border:4.200px solid #4380b7;border-radius:12px;background:#fff"></div>
<div style="left:259.6px;top:225px;width:182.800px;height:132px;background:#edf5fd"></div>
<svg style="position:absolute;left:264px;top:241px" width="171" height="96" viewBox="0 0 330 185" preserveAspectRatio="none"><defs>
<linearGradient id="p02a" x1="0" y1="0" x2="1" y2="0"><stop offset="0" stop-color="#e2c6ac"/><stop offset=".1" stop-color="#cbd3b0"/><stop offset=".24" stop-color="#72b9a1"/><stop offset=".37" stop-color="#38a090"/><stop offset=".5" stop-color="#228a82"/><stop offset=".67" stop-color="#165f70"/><stop offset=".85" stop-color="#0d3852"/><stop offset="1" stop-color="#081e32"/></linearGradient>
<linearGradient id="p02b" x1="0" y1="0" x2="0" y2="1"><stop offset="0" stop-color="#f5f1a8" stop-opacity="0"/><stop offset=".27" stop-color="#f5f1a8" stop-opacity=".14"/><stop offset=".5" stop-color="#f5f1a8" stop-opacity=".5"/><stop offset=".7" stop-color="#f5f1a8" stop-opacity=".9"/><stop offset=".86" stop-color="#f7f2ac" stop-opacity="1"/></linearGradient>
<linearGradient id="p02c" x1="0" y1="0" x2="0" y2="1"><stop offset="0" stop-color="#a6cc9c"/><stop offset=".3" stop-color="#4fab7e"/><stop offset=".65" stop-color="#1f7654"/><stop offset="1" stop-color="#063628"/></linearGradient>
<radialGradient id="p02d" cx="132" cy="128" r="108" gradientUnits="userSpaceOnUse" gradientTransform="translate(132 128) scale(1 .55) translate(-132 -128)"><stop offset="0" stop-color="#f0eaa2" stop-opacity="1"/><stop offset=".55" stop-color="#e4e29c" stop-opacity=".9"/><stop offset="1" stop-color="#c6d898" stop-opacity="0"/></radialGradient>
<radialGradient id="p02e" cx=".36" cy=".46" r=".9"><stop offset=".66" stop-color="#031018" stop-opacity="0"/><stop offset=".86" stop-color="#031018" stop-opacity=".42"/><stop offset="1" stop-color="#031018" stop-opacity=".8"/></radialGradient>
<radialGradient id="p02k" cx="0" cy="0" r="95" gradientUnits="userSpaceOnUse"><stop offset="0" stop-color="#e8c8ae" stop-opacity=".95"/><stop offset=".45" stop-color="#d6d6b2" stop-opacity=".7"/><stop offset="1" stop-color="#c8dab0" stop-opacity="0"/></radialGradient>
<linearGradient id="p02f" x1="0" y1="0" x2="1" y2="0"><stop offset=".55" stop-color="#053a32" stop-opacity="0"/><stop offset="1" stop-color="#053a32" stop-opacity=".4"/></linearGradient>
<radialGradient id="p02g" cx="49" cy="100" r="17" gradientUnits="userSpaceOnUse"><stop offset="0" stop-color="#ffffa8"/><stop offset=".3" stop-color="#f6ea5c" stop-opacity=".95"/><stop offset="1" stop-color="#f0dc50" stop-opacity="0"/></radialGradient>
<linearGradient id="p02h" x1="0" y1="0" x2="1" y2="0"><stop offset="0" stop-color="#b9a83c"/><stop offset=".35" stop-color="#8a8438"/><stop offset=".7" stop-color="#565a2c"/><stop offset="1" stop-color="#363e22"/></linearGradient>
<filter id="p02bl" x="-50%" y="-50%" width="200%" height="200%"><feGaussianBlur stdDeviation="1.2"/></filter>
<filter id="p02bl2" x="-30%" y="-30%" width="160%" height="160%"><feGaussianBlur stdDeviation="3.5"/></filter>
</defs>
<rect width="330" height="110" fill="url(#p02a)"/>
<rect width="330" height="110" fill="url(#p02b)"/>
<rect width="120" height="80" fill="url(#p02k)"/>
<path d="M92 18 Q118 8 142 20 Q120 24 92 18Z M165 36 Q182 40 176 52 Q166 48 165 36Z" fill="#d6cdbc" opacity=".5" filter="url(#p02bl2)"/>
<path d="M262 98 Q292 72 322 50 L330 58 Q304 78 272 102Z" fill="#f2d4ae" opacity=".6" filter="url(#p02bl2)"/>
<rect y="108" width="330" height="77" fill="url(#p02c)"/>
<rect y="108" width="330" height="77" fill="url(#p02d)"/>
<rect y="108" width="330" height="77" fill="url(#p02f)"/>
<rect x="170" y="110" width="15" height="40" fill="#f2c070" opacity=".7" filter="url(#p02bl2)"/>
<path d="M92 87 Q104 89 120 93 Q140 99 150 98 Q160 94 168 92 Q180 90 192 91 Q204 89 216 93 Q228 93 240 99 Q254 102 268 103 Q286 100 302 103 Q316 101 330 102 L330 109 L92 109Z" fill="#2a3a26"/>
<path d="M184 94 Q198 90 212 94 Q226 98 236 106 L238 109 L184 109Z" fill="#55602e" opacity=".6"/><path d="M128 98 Q146 99 158 95 L166 93 L168 109 L126 109Z" fill="#4a5630" opacity=".5"/>
<path d="M238 101 Q252 103 268 104 Q286 101 302 104 Q316 102 330 103 L330 109 L238 109Z" fill="#16261e"/>
<path d="M0 26 L84 49 L92 53 L169 77 L236 101 L236 105 L169 87 L92 68 L60 58 L0 42Z" fill="#141e1a"/>
<path d="M92 56 L169 79 L169 82 L92 61Z" fill="#39443a" opacity=".9"/>
<path d="M0 42 L60 58 L60 90 Q52 78 40 73 Q24 66 10 69 L0 73Z" fill="#17241e"/>
<path d="M0 44 L60 60 M0 56 L40 66 M6 44 V69 M14 46 V66 M22 48 V66 M30 50 V68 M38 52 V70 M46 54 V74 M54 57 V82 M0 56 L6 45 L14 58 L22 49 L30 61 L38 53 L46 66 L54 58 L60 72" stroke="#dfe4a4" stroke-width=".7" fill="none" opacity=".38"/>
<path d="M60 56 L84 56 L84 90 L60 90Z" fill="#1a261e"/>
<path d="M84 46 Q84 43 88 43 Q92 43 92 46 L92 89 L84 89Z" fill="#3c483e"/>
<path d="M84 46 L87 46 L87 89 L84 89Z" fill="#27322a"/>
<rect x="74.500" y="74" width="1.500" height="12" fill="#eef0b4"/>
<path d="M0 84 Q10 80 22 82 Q34 86 44 90 L44 108 L0 108Z" fill="#14261a"/>
<path d="M19 83 Q20 75 28 74 Q36 77 34 84Z" fill="#111e14"/>
<rect x="43" y="88.500" width="84" height="19" fill="url(#p02h)"/>
<path d="M96 88.500 H127 V107.500 H96Z" fill="#2c3420" opacity=".45"/>
<path d="M50 93 H124 M50 97 H124 M50 101 H124" stroke="#d8cf60" stroke-width=".9" stroke-dasharray="1.200 1.800" opacity=".7"/>
<circle cx="49" cy="100" r="15" fill="url(#p02g)"/>
<path d="M49 83 L50 99 L66 100 L50 101 L49 119 L48 101 L33 100 L48 99Z M39 88 L50 99 L60 113 L48 101Z M58 90 L50 101 L41 111 L48 99Z" fill="#fffba4" opacity=".85"/>
<rect x="2" y="100" width="12" height="4" fill="#f2e466"/>
<path d="M0 106 L128 105.500 Q138 107 144 112 Q120 116 96 117 Q60 120 36 123 Q20 126 0 129Z" fill="#0b1712"/>
<path d="M0 126 Q8 127 12 136 Q20 148 30 156 Q48 160 64 172 Q72 178 72 185 L0 185Z" fill="#070e0c"/>
<g fill="#0c1714">
<path d="M42 139 Q45 123 58 122 Q71 123 74 137 Q60 142 42 139Z"/>
<ellipse cx="77" cy="133" rx="4" ry="2.500"/><ellipse cx="100" cy="149" rx="9" ry="4.500"/><ellipse cx="102" cy="159" rx="11" ry="4.500"/>
<ellipse cx="141" cy="154" rx="16" ry="5.500"/><ellipse cx="161" cy="166" rx="12" ry="5.500"/><ellipse cx="196" cy="166" rx="9" ry="6"/>
<ellipse cx="181" cy="153" rx="6" ry="2.500"/><ellipse cx="181" cy="177" rx="10" ry="4"/><ellipse cx="76" cy="175" rx="8" ry="5.500"/>
<ellipse cx="40" cy="152" rx="5" ry="2.500"/><ellipse cx="18" cy="141" rx="6" ry="2"/><ellipse cx="154" cy="114" rx="2.200" ry="1.200"/>
<ellipse cx="70" cy="160" rx="4" ry="1.500"/><ellipse cx="100" cy="166" rx="5" ry="1.800"/>
</g>
<path d="M92 50 Q135 40 170 23 M92 52 Q135 44 170 29 M182 23 Q200 70 230 98 M182 29 Q203 76 229 100" stroke="#1c2a2c" stroke-width="1" fill="none"/>
<path d="M100 49 V58 M108 47 V61 M116 45 V63 M124 43 V66 M132 40 V68 M140 37 V70 M148 34 V73 M156 31 V75 M164 27 V78 M188 40 V84 M195 54 V87 M202 66 V90 M210 78 V93 M218 88 V96" stroke="#2a3a38" stroke-width=".5" opacity=".7"/>
<path d="M169.500 20 H173.500 V108 H169.500Z M178.500 20 H182.500 V108 H178.500Z M169.500 20 H182.500 V23.500 H169.500Z M169.500 37 H182.500 V40.500 H169.500Z M169.500 55 H182.500 V58.500 H169.500Z M169.500 73 H182.500 V77 H169.500Z" fill="#c4432a"/>
<path d="M169.500 84 H182.500 V108 H169.500Z" fill="#a2482c" opacity=".92"/>
<path d="M171 86 L181 95 M181 86 L171 95 M171 96 L181 106 M181 96 L171 106" stroke="#5a2a18" stroke-width="1"/>
<path d="M227.500 79 H229.300 V108 H227.500Z M231.200 79 H233 V108 H231.200Z M227.500 79 H233 V81 H227.500Z M227.500 88 H233 V90 H227.500Z M227.500 97 H233 V99 H227.500Z" fill="#c2462c"/>
<rect x="160" y="107" width="34" height="2" fill="#2a382c"/>
<g fill="#ffeaa4"><circle cx="24" cy="26.500" r="1.700"/><circle cx="60" cy="37.500" r="1.500"/></g>
<path d="M24 17 L24.600 26 L33 26.500 L24.600 27 L24 36 L23.400 27 L14 26.500 L23.400 26Z M60 31 L60.500 37.100 L67 37.500 L60.500 37.900 L60 44 L59.500 37.900 L53 37.500 L59.500 37.100Z" fill="#ffdcae" opacity=".9"/>
<path d="M0 10 L24 26.500" stroke="#f2a090" stroke-width="1" opacity=".65"/>
<rect width="330" height="185" fill="url(#p02e)"/>
</svg>
<svg style="left:263px;top:370px" width="12" height="12" viewBox="0 0 12 12"><rect x=".6" y=".6" width="10.800" height="10.800" rx="1.300" fill="#fff" stroke="#1c1c1c" stroke-width="1.200"/><path d="M2.600 6.200 L5 8.800 L9.500 3.200" fill="none" stroke="#111" stroke-width="1.400"/></svg>
<span class="t" style="top:362.8px;font-size:14.67px;line-height:17px;left:362.4px;font-weight:bold;letter-spacing:-0.001px;transform:translateX(-50%);">Golden Gate Bridge</span>
<span class="t" style="top:378.8px;font-size:14.67px;line-height:17px;left:363px;font-weight:bold;letter-spacing:-0.227px;transform:translateX(-50%);">02.jpg</span>
<div style="left:299.5px;top:346px;width:127px;height:15px;background:#fff"></div>
<span class="t" style="top:345.8px;font-size:12.3px;line-height:16px;left:363px;letter-spacing:-0.006px;transform:translateX(-50%);-webkit-text-stroke:.3px #000;">551,54 KB, 1920x1080</span>
<div style="left:55.6px;top:423.8px;width:186.600px;height:142.400px;border:2.800px solid #d3d3d3;border-radius:9.500px;background:#fff"></div>
<svg style="position:absolute;left:62px;top:447px" width="171" height="96" viewBox="0 0 171 96" preserveAspectRatio="none"><defs>
<linearGradient id="p06a" x1="0" y1="0" x2="1" y2="0"><stop offset="0" stop-color="#96844e"/><stop offset=".2" stop-color="#7e724c"/><stop offset=".42" stop-color="#464236"/><stop offset=".7" stop-color="#383734"/><stop offset=".9" stop-color="#555755"/><stop offset="1" stop-color="#696b69"/></linearGradient>
<linearGradient id="p06b" x1="0" y1="0" x2="0" y2="1"><stop offset="0" stop-color="#2a2826" stop-opacity=".45"/><stop offset=".3" stop-color="#8a8468" stop-opacity=".0"/><stop offset=".62" stop-color="#b4b08e" stop-opacity=".5"/><stop offset=".74" stop-color="#bcb896" stop-opacity=".75"/></linearGradient>
<radialGradient id="p06c" cx="22" cy="56" r="55" gradientUnits="userSpaceOnUse" gradientTransform="translate(22 56) scale(1 .5) translate(-22 -56)"><stop offset="0" stop-color="#ebe2b0" stop-opacity=".95"/><stop offset=".6" stop-color="#d8ce9a" stop-opacity=".5"/><stop offset="1" stop-color="#d6cc98" stop-opacity="0"/></radialGradient>
<linearGradient id="p06w" x1="0" y1="0" x2="0" y2="1"><stop offset="0" stop-color="#4e4a40"/><stop offset=".16" stop-color="#8e8e84"/><stop offset=".42" stop-color="#949284"/><stop offset=".68" stop-color="#8a806a"/><stop offset="1" stop-color="#6a5c46"/></linearGradient>
<filter id="p06bl" x="-50%" y="-50%" width="200%" height="200%"><feGaussianBlur stdDeviation="1.2"/></filter>
</defs>
<rect width="171" height="72" fill="url(#p06a)"/>
<rect width="171" height="72" fill="url(#p06b)"/>
<rect width="171" height="72" fill="url(#p06c)"/>
<path d="M140 0 L171 0 L171 12 L120 60Z" fill="#8a8d8c" opacity=".25" filter="url(#p06bl)"/>
<path d="M69 70 Q80 62 90 58 Q96 55 101 57 Q112 58 122 62 Q135 62 146 61 Q158 56 171 58 L171 71 L69 71Z" fill="#5e5634"/>
<path d="M96 57 Q104 64 110 70 L69 70 Q82 62 96 57Z M146 61 Q158 56 171 58 L171 64 Q158 64 150 70 L140 70Z" fill="#857646" opacity=".75"/>
<rect y="70" width="171" height="26" fill="url(#p06w)"/>
<path d="M0 73 Q20 70 40 74 Q70 78 100 76 Q130 74 171 78 L171 84 Q140 80 105 82 Q60 84 0 80Z" fill="#c8c8be" opacity=".62" filter="url(#p06bl)"/>
<path d="M100 80 Q130 80 171 84 L171 92 Q140 90 112 86Z" fill="#e0e0d8" opacity=".78" filter="url(#p06bl)"/>
<path d="M0 86 Q40 84 80 86 Q120 90 171 94 L171 96 L0 96Z" fill="#4a3e2c" opacity=".45"/>
<path d="M0 81 L4 82 L14 86 L17 90 L0 91Z" fill="#120e0a"/>
<path d="M0 60 L10 58 L20 61 L40 63 L66 63 L68 70 L0 71Z" fill="#1f1a12"/>
<path d="M17 46 H57 V63 H50 Q44 50 36 50 Q26 51 22 63 H17Z" fill="#7b3a28"/>
<path d="M17 46 H57 M20 47 L24 56 M26 47 L30 52 M34 47 L36 50 M44 47 L42 51 M50 47 L47 55 M54 47 L52 60" stroke="#4e2016" stroke-width=".8" fill="none"/>
<rect x="12.500" y="41" width="5" height="22" fill="#94875c"/><path d="M12 41 Q15 37 18 41Z" fill="#8e825a"/>
<rect x="8" y="44" width="3.500" height="15" fill="#c7b578"/>
<rect x="56" y="45" width="4" height="18" fill="#9c9068"/><path d="M55.500 45 Q58 41 60.500 45Z" fill="#857a56"/>
<path d="M0 43.500 L60 45.300 L171 56.400 L171 58.800 L60 48.300 L0 46.500Z" fill="#2b1611"/>
<path d="M0 46.500 L60 48.300 L125 54.500 L125 55.800 L60 50 L0 48.500Z" fill="#7a3322" opacity=".9"/>
<path d="M60 45 Q100 34 124 16 M131.500 16 Q150 40 171 52 M131.500 22 Q150 44 171 55" stroke="#3a2a24" stroke-width=".8" fill="none"/>
<path d="M66 43 V48 M71 42 V49 M76 40 V49 M81 38 V50 M86 36 V50 M91 34 V51 M96 32 V51 M101 29 V52 M106 27 V52 M111 24 V53 M116 21 V53 M120 19 V54 M136 24 V55 M141 30 V55 M146 35 V56 M151 40 V56 M156 44 V57 M161 47 V57 M166 50 V58" stroke="#4a3a30" stroke-width=".45" opacity=".8"/>
<path d="M124 15.300 H126.600 V70 H124Z M128.900 15.300 H131.500 V70 H128.900Z M124 15.300 H131.500 V17.500 H124Z M124 27 H131.500 V29.500 H124Z M124 39 H131.500 V41.500 H124Z M124 50 H131.500 V53 H124Z" fill="#b8432b"/>
<path d="M124 57 H131.500 V70 H124Z" fill="#7c3a22"/>
<path d="M120 69 H135 V71 H120Z" fill="#c49a4a"/>
</svg>
<svg style="left:61px;top:576px" width="12" height="12" viewBox="0 0 12 12"><rect x=".6" y=".6" width="10.800" height="10.800" rx="1.300" fill="#fff" stroke="#1c1c1c" stroke-width="1.200"/></svg>
<span class="t" style="top:568.8px;font-size:14.67px;line-height:17px;left:160.4px;font-weight:bold;color:#a9a9a9;letter-spacing:-0.001px;transform:translateX(-50%);">Golden Gate Bridge</span>
<span class="t" style="top:584.8px;font-size:14.67px;line-height:17px;left:161px;font-weight:bold;color:#a9a9a9;letter-spacing:-0.227px;transform:translateX(-50%);">06.jpg</span>
<span class="t" style="top:602.5px;font-size:12.3px;line-height:16px;left:161px;color:#a9a9a9;letter-spacing:-0.006px;transform:translateX(-50%);-webkit-text-stroke:.25px #a9a9a9;">622,09 KB, 1920x1080</span>
<div style="left:257.6px;top:423.8px;width:186.600px;height:142.400px;border:2.800px solid #d3d3d3;border-radius:9.500px;background:#fff"></div>
<svg style="position:absolute;left:264px;top:447px" width="171" height="96" viewBox="0 0 171 96" preserveAspectRatio="none"><defs>
<linearGradient id="p07a" x1="0" y1="0" x2="0" y2="1"><stop offset="0" stop-color="#d5d6ee"/><stop offset=".18" stop-color="#dcd0e6"/><stop offset=".38" stop-color="#e6a7b4"/><stop offset=".5" stop-color="#d89ab8"/><stop offset=".58" stop-color="#c6b4d8"/><stop offset=".74" stop-color="#c2bcd2"/><stop offset=".8" stop-color="#a6adbd"/><stop offset="1" stop-color="#9aa2b2"/></linearGradient>
<radialGradient id="p07b" cx="6" cy="34" r="40" gradientUnits="userSpaceOnUse" gradientTransform="translate(6 34) scale(1 .5) translate(-6 -34)"><stop offset="0" stop-color="#ffd070" stop-opacity="1"/><stop offset=".5" stop-color="#f49a5a" stop-opacity=".7"/><stop offset="1" stop-color="#ee8a6a" stop-opacity="0"/></radialGradient>
<filter id="p07bl" x="-50%" y="-50%" width="200%" height="200%"><feGaussianBlur stdDeviation="1.6"/></filter>
</defs>
<rect width="171" height="96" fill="url(#p07a)"/>
<rect width="171" height="60" fill="url(#p07b)"/>
<g filter="url(#p07bl)">
<path d="M0 2 Q14 0 30 3 Q44 8 58 14 Q66 18 70 22 Q56 20 44 14 Q28 8 10 8 Q4 8 0 6Z" fill="#c97a86" opacity=".9"/>
<path d="M62 0 Q80 2 98 4 L98 12 Q86 12 76 6 Q68 3 62 0Z" fill="#ee8466" opacity=".95"/>
<path d="M60 34 Q78 34 98 40 L98 50 Q78 46 58 40Z" fill="#e27f98" opacity=".7"/>
<path d="M72 20 Q86 22 98 24 L98 32 Q84 28 72 24Z" fill="#b58ab0" opacity=".7"/>
<path d="M84 52 Q92 50 98 50 L98 62 Q90 60 84 58Z" fill="#e8e2ee" opacity=".9"/>
<path d="M100 0 H171 V60 H100Z" fill="#e0a6b6" opacity=".6"/>
</g>
<path d="M27 5 Q60 40 98 66 M27 20 Q62 52 98 69 M0 10 L6 7 M0 14 L6 11" stroke="#b8442a" stroke-width="1" fill="none"/>
<path d="M1 10 V96 M33 14 V96 M39 20 V94 M45 27 V92 M51 33 V90 M57 38 V89 M63 44 V87 M68 48 V86 M73 52 V84 M78 56 V83 M83 60 V81 M88 63 V80 M93 66 V79" stroke="#b0503c" stroke-width=".7" opacity=".75"/>
<path d="M28 96 L98 76 L98 81 L60 96Z" fill="#c8401c"/>
<path d="M34 96 L98 78.500 L98 80 L46 96Z" fill="#8a8a8a" opacity=".8"/>
<path d="M5.500 7 L9 3.500 L12.300 7 V96 H5.500Z M20.500 6 L24 2.500 L27.600 6 V96 H20.500Z" fill="#d63e1a"/>
<path d="M12.300 7.400 H20.500 V13.500 H12.300Z M12.300 26 H20.500 V34 H12.300Z M12.300 47 H20.500 V55 H12.300Z M12.300 72 H20.500 V81 H12.300Z" fill="#c83614"/>
<path d="M4.500 72 H6.500 V96 H4.500Z M26.500 72 H28 V96 H26.500Z M5 47 H6 V72 H5Z" fill="#d8401a"/>
<path d="M8.900 7 V96 M24 6 V96" stroke="#9c2a10" stroke-width="1" opacity=".55"/>
</svg>
<svg style="left:263px;top:576px" width="12" height="12" viewBox="0 0 12 12"><rect x=".6" y=".6" width="10.800" height="10.800" rx="1.300" fill="#fff" stroke="#1c1c1c" stroke-width="1.200"/></svg>
<span class="t" style="top:568.8px;font-size:14.67px;line-height:17px;left:362.4px;font-weight:bold;color:#a9a9a9;letter-spacing:-0.001px;transform:translateX(-50%);">Golden Gate Bridge</span>
<span class="t" style="top:584.8px;font-size:14.67px;line-height:17px;left:363px;font-weight:bold;color:#a9a9a9;letter-spacing:-0.227px;transform:translateX(-50%);">07.jpg</span>
<span class="t" style="top:602.5px;font-size:12.3px;line-height:16px;left:363px;color:#a9a9a9;letter-spacing:-0.006px;transform:translateX(-50%);-webkit-text-stroke:.25px #a9a9a9;">636,27 KB, 1920x1080</span>
<div style="left:55.6px;top:629.8px;width:186.600px;height:142.400px;border:2.800px solid #d3d3d3;border-radius:9.500px;background:#fff"></div>
<svg style="position:absolute;left:62px;top:653px" width="171" height="96" viewBox="0 0 171 96" preserveAspectRatio="none"><defs>
<linearGradient id="p11a" x1="0" y1="0" x2="0" y2="1"><stop offset="0" stop-color="#b4b7bb"/><stop offset=".3" stop-color="#d2d4d7"/><stop offset=".6" stop-color="#c8cbce"/><stop offset="1" stop-color="#aeb4b8"/></linearGradient>
<linearGradient id="p11w" x1="0" y1="0" x2="0" y2="1"><stop offset="0" stop-color="#76888a"/><stop offset=".3" stop-color="#5f8c84"/><stop offset=".6" stop-color="#4f8379"/><stop offset="1" stop-color="#3d6862"/></linearGradient>
<linearGradient id="p11r" x1="0" y1="0" x2="1" y2="0"><stop offset="0" stop-color="#38352c"/><stop offset=".3" stop-color="#403a2e"/><stop offset=".55" stop-color="#262728"/><stop offset=".8" stop-color="#45494e"/><stop offset="1" stop-color="#1e2022"/></linearGradient>
<filter id="p11bl" x="-50%" y="-50%" width="200%" height="200%"><feGaussianBlur stdDeviation="1.4"/></filter>
</defs>
<rect width="171" height="66" fill="url(#p11a)"/>
<path d="M38 56 Q50 48 66 46 Q80 42 90 44 Q110 44 130 46 Q150 44 171 46 L171 64 L38 64Z" fill="#8c9397" opacity=".85" filter="url(#p11bl)"/>
<path d="M86 50 Q100 48 120 52 L171 52 L171 64 L86 64Z" fill="#6e777b" opacity=".6" filter="url(#p11bl)"/>
<rect y="62" width="171" height="34" fill="url(#p11w)"/>
<path d="M0 66 H171 V70 H0Z" fill="#8fa5a2" opacity=".5"/>
<path d="M0 84 H171 V88 H0Z" fill="#2f5c55" opacity=".35"/>
<g opacity=".85" filter="url(#p11bl)"><path d="M71 20 Q73 19 74.500 20 V62 H71Z M78 20 Q80 19 81.500 20 V62 H78Z M71 27 H81.500 V30 H71Z M71 44 H81.500 V47 H71Z" fill="#a5525a"/></g>
<path d="M34 0 Q44 18 62 26 Q70 24 76 19 M49 0 Q56 16 66 26" stroke="#8a4a52" stroke-width=".9" fill="none" opacity=".8"/>
<path d="M26 0 V8 M31 0 V10 M36 0 V13 M41 0 V16 M46 0 V18 M51 0 V21" stroke="#9a6a70" stroke-width=".5" opacity=".7"/>
<path d="M22 4 L60 24 L84 44 L86 50 L74 47 L50 30 L22 18Z" fill="#33323a"/>
<path d="M22 4 L60 24 L84 44 L84 45.200 L59 26 L22 7Z" fill="#7e3b46"/>
<path d="M0 0 H24 V4 H0Z M19 4 H24 V20 H19Z" fill="#4a2a30"/>
<path d="M0 3 L20 3 L22 18 L30 36 L38 56 L36 62 L34 66 L18 70 L14 72 L0 72Z" fill="#35352e"/>
<path d="M4 10 L18 14 L26 36 L22 50 L10 40Z" fill="#4c4a3a" opacity=".8"/>
<path d="M0 60 L20 58 L34 64 L34 67 L18 71 L0 72Z" fill="#1c1d1c"/>
<path d="M33 58 L40 56 L54 58 L54 55 L57 55 L57 58 L64 58 L64 56 L70 56 L72 59 L76 60 L76 64 L33 65Z" fill="#222324"/>
<path d="M126 17.500 L130 19 L138 28 L148 38 L149 50 L156 62 L157 72 L150 73 L128 71 L124 74 L96 74 L90 74 L96 66 L104 50 L112 36 L120 24Z" fill="url(#p11r)"/>
<path d="M126 18 L120 24 L112 38 L106 52 L110 56 L118 42 L124 30Z" fill="#7a6a3e" opacity=".5"/>
<path d="M128 50 L136 44 L140 52 L134 68 L126 70Z M144 56 L152 60 L154 70 L146 70Z" fill="#5a636c" opacity=".7"/>
<path d="M96 68 L112 66 L124 70 L124 74 L92 74Z" fill="#3c4248"/>
</svg>
<svg style="left:61px;top:782px" width="12" height="12" viewBox="0 0 12 12"><rect x=".6" y=".6" width="10.800" height="10.800" rx="1.300" fill="#fff" stroke="#1c1c1c" stroke-width="1.200"/></svg>
<span class="t" style="top:774.8px;font-size:14.67px;line-height:17px;left:160.4px;font-weight:bold;color:#a9a9a9;letter-spacing:-0.001px;transform:translateX(-50%);">Golden Gate Bridge</span>
<span class="t" style="top:790.8px;font-size:14.67px;line-height:17px;left:161px;font-weight:bold;color:#a9a9a9;letter-spacing:-0.091px;transform:translateX(-50%);">11.jpg</span>
<div style="left:257.6px;top:629.8px;width:186.600px;height:142.400px;border:2.800px solid #d3d3d3;border-radius:9.500px;background:#fff"></div>
<svg style="position:absolute;left:264px;top:653px" width="171" height="96" viewBox="0 0 171 96" preserveAspectRatio="none"><defs>
<linearGradient id="p12a" x1="0" y1="0" x2="1" y2="1"><stop offset="0" stop-color="#82769e"/><stop offset=".3" stop-color="#a99bb4"/><stop offset=".55" stop-color="#d4c4ca"/><stop offset=".75" stop-color="#e8d9d2"/><stop offset="1" stop-color="#cdbcc6"/></linearGradient>
<linearGradient id="p12w" x1="0" y1="0" x2="0" y2="1"><stop offset="0" stop-color="#7c7898"/><stop offset=".25" stop-color="#55527c"/><stop offset=".7" stop-color="#3f3d66"/><stop offset="1" stop-color="#302e50"/></linearGradient>
<linearGradient id="p12s" x1="0" y1="0" x2="0" y2="1"><stop offset="0" stop-color="#ffb060" stop-opacity=".95"/><stop offset="1" stop-color="#c8604a" stop-opacity=".35"/></linearGradient>
<filter id="p12bl" x="-50%" y="-50%" width="200%" height="200%"><feGaussianBlur stdDeviation="1.3"/></filter>
</defs>
<rect width="171" height="70" fill="url(#p12a)"/>
<rect y="67" width="171" height="29" fill="url(#p12w)"/>
<path d="M0 64 H171 V69 H0Z" fill="#b89ab0" opacity=".7" filter="url(#p12bl)"/>
<path d="M0 66 H100 V68.500 H0Z" fill="#e0a070" opacity=".55"/>
<path d="M74 68 L82 68 L62 96 L44 96Z" fill="url(#p12s)" filter="url(#p12bl)"/>
<path d="M110 74 H171 V77 H110Z M96 84 H171 V86 H96Z" fill="#6a6898" opacity=".5"/>
<g fill="#8a7a98"><rect x="75" y="54" width="2.500" height="14"/><rect x="79" y="58" width="2" height="10"/><rect x="82.500" y="57" width="2" height="11"/><rect x="90" y="61" width="3" height="7"/><rect x="94" y="60" width="2.500" height="8"/><rect x="86" y="63" width="3" height="5"/><rect x="98" y="63" width="6" height="5"/></g>
<g filter="url(#p12bl)" fill="#fff4d8"><circle cx="4.500" cy="43" r="2.200"/><circle cx="9" cy="41.500" r="1.600"/><circle cx="19" cy="46.500" r="2"/><circle cx="24" cy="45" r="2"/><circle cx="29" cy="49" r="1.500"/><circle cx="49" cy="52" r="1.500"/></g>
<path d="M0 28 Q18 24 32 17 M0 30 Q18 27 32 21 M44.500 17 Q54 44 66 58 Q70 60 72 58 M44.500 21 Q55 48 66 60" stroke="#3c3040" stroke-width=".8" fill="none"/>
<path d="M0 28 Q18 24 32 17" stroke="#f8f0e0" stroke-width="1" stroke-dasharray=".8 1.600" fill="none" opacity=".9"/>
<path d="M3 29 V54 M7 28 V54 M11 27 V55 M15 26 V55 M19 24 V56 M23 23 V56 M27 21 V57 M48 30 V59 M52 40 V60 M56 48 V61 M60 54 V62" stroke="#5a4a5c" stroke-width=".45" opacity=".8"/>
<path d="M0 51 L34 55 L60 60 L76 66 L80 69 L76 71 L60 66 L34 62 L0 61Z" fill="#2a2226"/>
<path d="M0 55 L34 58.500 L60 63 L76 68" stroke="#e89a50" stroke-width="1" stroke-dasharray="1 1.400" fill="none" opacity=".85"/>
<path d="M31.500 15 H44.500 V18 H31.500Z M31.500 15 H34 V86 H31.500Z M42 15 H44.500 V86 H42Z M31.500 54 H44.500 V56.500 H31.500Z M30 70 H46 V72 H30Z" fill="#2a2428"/>
<path d="M33 18 L43 30 M43 18 L33 30 M33 30 L43 42 M43 30 L33 42 M33 42 L43 54 M43 42 L33 54 M33 62 L43 72 M43 62 L33 72 M33 72 L43 84 M43 72 L33 84" stroke="#2a2428" stroke-width="1.100"/>
<path d="M36 44 L43 50" stroke="#e06a3a" stroke-width="1.200"/>
<path d="M28 84 H48 L52 87 V91 Q37 94 22 91 V87Z" fill="#1e2224"/>
<path d="M67 47 H72.500 V49 H67Z M67 47 H68.600 V72 H67Z M70.900 47 H72.500 V72 H70.900Z M65 71 H74 V73 H65Z" fill="#3a3038"/>
<rect x="76" y="66" width="4" height="7" fill="#4a4048"/>
</svg>
<svg style="left:263px;top:782px" width="12" height="12" viewBox="0 0 12 12"><rect x=".6" y=".6" width="10.800" height="10.800" rx="1.300" fill="#fff" stroke="#1c1c1c" stroke-width="1.200"/></svg>
<span class="t" style="top:774.8px;font-size:14.67px;line-height:17px;left:362.4px;font-weight:bold;color:#a9a9a9;letter-spacing:-0.001px;transform:translateX(-50%);">Golden Gate Bridge</span>
<span class="t" style="top:790.8px;font-size:14.67px;line-height:17px;left:363px;font-weight:bold;color:#a9a9a9;letter-spacing:-0.227px;transform:translateX(-50%);">12.jpg</span>
<div style="left:459.6px;top:629.8px;width:186.600px;height:142.400px;border:2.800px solid #d3d3d3;border-radius:9.500px;background:#fff"></div>
<svg style="position:absolute;left:466px;top:653px" width="171" height="96" viewBox="0 0 171 96" preserveAspectRatio="none"><defs><linearGradient id="p13a" x1="0" y1="0" x2="0" y2="1"><stop offset="0" stop-color="#7a9ab0"/><stop offset="1" stop-color="#2a4a48"/></linearGradient></defs>
<rect width="171" height="96" fill="url(#p13a)"/>
<path d="M0 76 H70 L40 96 H0Z" fill="#27504c"/><path d="M0 76 L70 76 L60 82 L0 84Z" fill="#42706a" opacity=".6"/>
<path d="M70 76 H171 V96 H18 Z" fill="#1c3018"/>
<path d="M30 90 L60 80 L100 78 L171 80 L171 86 L100 84 L60 88 L36 96Z" fill="#263e1e" opacity=".9"/>
<g fill="#6a4a9a"><circle cx="98" cy="84" r="1.200"/><circle cx="133" cy="82" r="1.200"/><circle cx="144" cy="89" r="1.100"/><circle cx="75" cy="90" r="1"/><circle cx="55" cy="92" r="1"/><circle cx="162" cy="86" r="1"/></g>
</svg>
<svg style="left:465px;top:782px" width="12" height="12" viewBox="0 0 12 12"><rect x=".6" y=".6" width="10.800" height="10.800" rx="1.300" fill="#fff" stroke="#1c1c1c" stroke-width="1.200"/></svg>
<span class="t" style="top:774.8px;font-size:14.67px;line-height:17px;left:564.4px;font-weight:bold;color:#a9a9a9;letter-spacing:-0.001px;transform:translateX(-50%);">Golden Gate Bridge</span>
<span class="t" style="top:790.8px;font-size:14.67px;line-height:17px;left:565px;font-weight:bold;color:#a9a9a9;letter-spacing:-0.227px;transform:translateX(-50%);">13.jpg</span>
<div style="left:661.6px;top:629.8px;width:186.600px;height:142.400px;border:2.800px solid #d3d3d3;border-radius:9.500px;background:#fff"></div>
<svg style="position:absolute;left:668px;top:653px" width="171" height="96" viewBox="0 0 171 96" preserveAspectRatio="none"><defs><linearGradient id="p14a" x1="0" y1="0" x2="1" y2="0"><stop offset="0" stop-color="#806a4c"/><stop offset=".45" stop-color="#6a4a32"/><stop offset=".7" stop-color="#c4a268"/><stop offset="1" stop-color="#e6d4a0"/></linearGradient></defs>
<rect width="171" height="96" fill="url(#p14a)"/>
<path d="M0 84 L24 80 L30 88 L0 94Z" fill="#a8906a"/>
<path d="M56 92 L84 80 L110 76 L112 80 L90 86 L70 96 L56 96Z" fill="#8a3a20"/>
<rect x="62" y="76" width="5" height="14" fill="#5a2414"/>
<path d="M90 76 H171 V82 L120 84Z" fill="#f4ead0" opacity=".8"/>
<path d="M60 96 L171 88 V96Z" fill="#4a2614"/>
</svg>
<svg style="left:667px;top:782px" width="12" height="12" viewBox="0 0 12 12"><rect x=".6" y=".6" width="10.800" height="10.800" rx="1.300" fill="#fff" stroke="#1c1c1c" stroke-width="1.200"/></svg>
<span class="t" style="top:774.8px;font-size:14.67px;line-height:17px;left:766.4px;font-weight:bold;color:#a9a9a9;letter-spacing:-0.001px;transform:translateX(-50%);">Golden Gate Bridge</span>
<span class="t" style="top:790.8px;font-size:14.67px;line-height:17px;left:767px;font-weight:bold;color:#a9a9a9;letter-spacing:-0.227px;transform:translateX(-50%);">14.jpg</span>
</div></div>
<div style="left:1135px;top:204px;width:17px;height:600px;background:#f9f9f9;"></div>
<div style="left:1136px;top:560px;width:15px;height:207px;background:#c1c1c1;"></div>
<svg style="left:1137.5px;top:790px" width="12" height="9" viewBox="0 0 12 9"><path d="M2 2.300 L6 6.300 L10 2.300" fill="none" stroke="#606060" stroke-width="1.100"/></svg>
<div style="left:1156px;top:151px;width:9px;height:679px;background:#f4f4f4;"></div>
<div style="left:1155px;top:151px;width:1px;height:679px;background:#c4c4c4;"></div>
<div style="left:49px;top:805px;width:138px;height:19px;background:#d9d9d9;"></div>
<span class="t" style="top:807.3px;font-size:11px;line-height:16px;left:53.3px;letter-spacing:0.143px;">Включая поддиректории</span>
<div style="left:189px;top:808px;width:1px;height:14px;background:#9c9c9c;"></div>
<div style="left:296px;top:808px;width:1px;height:14px;background:#9c9c9c;"></div>
<div style="left:583px;top:808px;width:1px;height:14px;background:#9c9c9c;"></div>
<span class="t" style="top:807.3px;font-size:11px;line-height:16px;left:197.3px;letter-spacing:0.103px;">Отметить</span>
<span class="t" style="top:807.3px;font-size:11px;line-height:16px;left:257.2px;letter-spacing:0.01px;">Снять</span>
<span class="t" style="top:807.3px;font-size:11px;line-height:16px;left:304.6px;letter-spacing:0.011px;">Отметить все</span>
<span class="t" style="top:807.3px;font-size:11px;line-height:16px;left:384.3px;letter-spacing:-0.016px;">Снять все</span>
<span class="t" style="top:807.3px;font-size:11px;line-height:16px;left:445.3px;letter-spacing:-0.027px;">Восстановить выделение</span>
<div style="left:6px;top:830px;width:1524px;height:1px;background:#d2d2d2;"></div>
<div style="left:1165px;top:151px;width:1px;height:679px;background:#c4c4c4;"></div>
<svg style="position:absolute;left:1183px;top:225px" width="330" height="185" viewBox="0 0 330 185" preserveAspectRatio="none"><defs>
<linearGradient id="pva" x1="0" y1="0" x2="1" y2="0"><stop offset="0" stop-color="#e2c6ac"/><stop offset=".1" stop-color="#cbd3b0"/><stop offset=".24" stop-color="#72b9a1"/><stop offset=".37" stop-color="#38a090"/><stop offset=".5" stop-color="#228a82"/><stop offset=".67" stop-color="#165f70"/><stop offset=".85" stop-color="#0d3852"/><stop offset="1" stop-color="#081e32"/></linearGradient>
<linearGradient id="pvb" x1="0" y1="0" x2="0" y2="1"><stop offset="0" stop-color="#f5f1a8" stop-opacity="0"/><stop offset=".27" stop-color="#f5f1a8" stop-opacity=".14"/><stop offset=".5" stop-color="#f5f1a8" stop-opacity=".5"/><stop offset=".7" stop-color="#f5f1a8" stop-opacity=".9"/><stop offset=".86" stop-color="#f7f2ac" stop-opacity="1"/></linearGradient>
<linearGradient id="pvc" x1="0" y1="0" x2="0" y2="1"><stop offset="0" stop-color="#a6cc9c"/><stop offset=".3" stop-color="#4fab7e"/><stop offset=".65" stop-color="#1f7654"/><stop offset="1" stop-color="#063628"/></linearGradient>
<radialGradient id="pvd" cx="132" cy="128" r="108" gradientUnits="userSpaceOnUse" gradientTransform="translate(132 128) scale(1 .55) translate(-132 -128)"><stop offset="0" stop-color="#f0eaa2" stop-opacity="1"/><stop offset=".55" stop-color="#e4e29c" stop-opacity=".9"/><stop offset="1" stop-color="#c6d898" stop-opacity="0"/></radialGradient>
<radialGradient id="pve" cx=".36" cy=".46" r=".9"><stop offset=".66" stop-color="#031018" stop-opacity="0"/><stop offset=".86" stop-color="#031018" stop-opacity=".42"/><stop offset="1" stop-color="#031018" stop-opacity=".8"/></radialGradient>
<radialGradient id="pvk" cx="0" cy="0" r="95" gradientUnits="userSpaceOnUse"><stop offset="0" stop-color="#e8c8ae" stop-opacity=".95"/><stop offset=".45" stop-color="#d6d6b2" stop-opacity=".7"/><stop offset="1" stop-color="#c8dab0" stop-opacity="0"/></radialGradient>
<linearGradient id="pvf" x1="0" y1="0" x2="1" y2="0"><stop offset=".55" stop-color="#053a32" stop-opacity="0"/><stop offset="1" stop-color="#053a32" stop-opacity=".4"/></linearGradient>
<radialGradient id="pvg" cx="49" cy="100" r="17" gradientUnits="userSpaceOnUse"><stop offset="0" stop-color="#ffffa8"/><stop offset=".3" stop-color="#f6ea5c" stop-opacity=".95"/><stop offset="1" stop-color="#f0dc50" stop-opacity="0"/></radialGradient>
<linearGradient id="pvh" x1="0" y1="0" x2="1" y2="0"><stop offset="0" stop-color="#b9a83c"/><stop offset=".35" stop-color="#8a8438"/><stop offset=".7" stop-color="#565a2c"/><stop offset="1" stop-color="#363e22"/></linearGradient>
<filter id="pvbl" x="-50%" y="-50%" width="200%" height="200%"><feGaussianBlur stdDeviation="1.2"/></filter>
<filter id="pvbl2" x="-30%" y="-30%" width="160%" height="160%"><feGaussianBlur stdDeviation="3.5"/></filter>
</defs>
<rect width="330" height="110" fill="url(#pva)"/>
<rect width="330" height="110" fill="url(#pvb)"/>
<rect width="120" height="80" fill="url(#pvk)"/>
<path d="M92 18 Q118 8 142 20 Q120 24 92 18Z M165 36 Q182 40 176 52 Q166 48 165 36Z" fill="#d6cdbc" opacity=".5" filter="url(#pvbl2)"/>
<path d="M262 98 Q292 72 322 50 L330 58 Q304 78 272 102Z" fill="#f2d4ae" opacity=".6" filter="url(#pvbl2)"/>
<rect y="108" width="330" height="77" fill="url(#pvc)"/>
<rect y="108" width="330" height="77" fill="url(#pvd)"/>
<rect y="108" width="330" height="77" fill="url(#pvf)"/>
<rect x="170" y="110" width="15" height="40" fill="#f2c070" opacity=".7" filter="url(#pvbl2)"/>
<path d="M92 87 Q104 89 120 93 Q140 99 150 98 Q160 94 168 92 Q180 90 192 91 Q204 89 216 93 Q228 93 240 99 Q254 102 268 103 Q286 100 302 103 Q316 101 330 102 L330 109 L92 109Z" fill="#2a3a26"/>
<path d="M184 94 Q198 90 212 94 Q226 98 236 106 L238 109 L184 109Z" fill="#55602e" opacity=".6"/><path d="M128 98 Q146 99 158 95 L166 93 L168 109 L126 109Z" fill="#4a5630" opacity=".5"/>
<path d="M238 101 Q252 103 268 104 Q286 101 302 104 Q316 102 330 103 L330 109 L238 109Z" fill="#16261e"/>
<path d="M0 26 L84 49 L92 53 L169 77 L236 101 L236 105 L169 87 L92 68 L60 58 L0 42Z" fill="#141e1a"/>
<path d="M92 56 L169 79 L169 82 L92 61Z" fill="#39443a" opacity=".9"/>
<path d="M0 42 L60 58 L60 90 Q52 78 40 73 Q24 66 10 69 L0 73Z" fill="#17241e"/>
<path d="M0 44 L60 60 M0 56 L40 66 M6 44 V69 M14 46 V66 M22 48 V66 M30 50 V68 M38 52 V70 M46 54 V74 M54 57 V82 M0 56 L6 45 L14 58 L22 49 L30 61 L38 53 L46 66 L54 58 L60 72" stroke="#dfe4a4" stroke-width=".7" fill="none" opacity=".38"/>
<path d="M60 56 L84 56 L84 90 L60 90Z" fill="#1a261e"/>
<path d="M84 46 Q84 43 88 43 Q92 43 92 46 L92 89 L84 89Z" fill="#3c483e"/>
<path d="M84 46 L87 46 L87 89 L84 89Z" fill="#27322a"/>
<rect x="74.500" y="74" width="1.500" height="12" fill="#eef0b4"/>
<path d="M0 84 Q10 80 22 82 Q34 86 44 90 L44 108 L0 108Z" fill="#14261a"/>
<path d="M19 83 Q20 75 28 74 Q36 77 34 84Z" fill="#111e14"/>
<rect x="43" y="88.500" width="84" height="19" fill="url(#pvh)"/>
<path d="M96 88.500 H127 V107.500 H96Z" fill="#2c3420" opacity=".45"/>
<path d="M50 93 H124 M50 97 H124 M50 101 H124" stroke="#d8cf60" stroke-width=".9" stroke-dasharray="1.200 1.800" opacity=".7"/>
<circle cx="49" cy="100" r="15" fill="url(#pvg)"/>
<path d="M49 83 L50 99 L66 100 L50 101 L49 119 L48 101 L33 100 L48 99Z M39 88 L50 99 L60 113 L48 101Z M58 90 L50 101 L41 111 L48 99Z" fill="#fffba4" opacity=".85"/>
<rect x="2" y="100" width="12" height="4" fill="#f2e466"/>
<path d="M0 106 L128 105.500 Q138 107 144 112 Q120 116 96 117 Q60 120 36 123 Q20 126 0 129Z" fill="#0b1712"/>
<path d="M0 126 Q8 127 12 136 Q20 148 30 156 Q48 160 64 172 Q72 178 72 185 L0 185Z" fill="#070e0c"/>
<g fill="#0c1714">
<path d="M42 139 Q45 123 58 122 Q71 123 74 137 Q60 142 42 139Z"/>
<ellipse cx="77" cy="133" rx="4" ry="2.500"/><ellipse cx="100" cy="149" rx="9" ry="4.500"/><ellipse cx="102" cy="159" rx="11" ry="4.500"/>
<ellipse cx="141" cy="154" rx="16" ry="5.500"/><ellipse cx="161" cy="166" rx="12" ry="5.500"/><ellipse cx="196" cy="166" rx="9" ry="6"/>
<ellipse cx="181" cy="153" rx="6" ry="2.500"/><ellipse cx="181" cy="177" rx="10" ry="4"/><ellipse cx="76" cy="175" rx="8" ry="5.500"/>
<ellipse cx="40" cy="152" rx="5" ry="2.500"/><ellipse cx="18" cy="141" rx="6" ry="2"/><ellipse cx="154" cy="114" rx="2.200" ry="1.200"/>
<ellipse cx="70" cy="160" rx="4" ry="1.500"/><ellipse cx="100" cy="166" rx="5" ry="1.800"/>
</g>
<path d="M92 50 Q135 40 170 23 M92 52 Q135 44 170 29 M182 23 Q200 70 230 98 M182 29 Q203 76 229 100" stroke="#1c2a2c" stroke-width="1" fill="none"/>
<path d="M100 49 V58 M108 47 V61 M116 45 V63 M124 43 V66 M132 40 V68 M140 37 V70 M148 34 V73 M156 31 V75 M164 27 V78 M188 40 V84 M195 54 V87 M202 66 V90 M210 78 V93 M218 88 V96" stroke="#2a3a38" stroke-width=".5" opacity=".7"/>
<path d="M169.500 20 H173.500 V108 H169.500Z M178.500 20 H182.500 V108 H178.500Z M169.500 20 H182.500 V23.500 H169.500Z M169.500 37 H182.500 V40.500 H169.500Z M169.500 55 H182.500 V58.500 H169.500Z M169.500 73 H182.500 V77 H169.500Z" fill="#c4432a"/>
<path d="M169.500 84 H182.500 V108 H169.500Z" fill="#a2482c" opacity=".92"/>
<path d="M171 86 L181 95 M181 86 L171 95 M171 96 L181 106 M181 96 L171 106" stroke="#5a2a18" stroke-width="1"/>
<path d="M227.500 79 H229.300 V108 H227.500Z M231.200 79 H233 V108 H231.200Z M227.500 79 H233 V81 H227.500Z M227.500 88 H233 V90 H227.500Z M227.500 97 H233 V99 H227.500Z" fill="#c2462c"/>
<rect x="160" y="107" width="34" height="2" fill="#2a382c"/>
<g fill="#ffeaa4"><circle cx="24" cy="26.500" r="1.700"/><circle cx="60" cy="37.500" r="1.500"/></g>
<path d="M24 17 L24.600 26 L33 26.500 L24.600 27 L24 36 L23.400 27 L14 26.500 L23.400 26Z M60 31 L60.500 37.100 L67 37.500 L60.500 37.900 L60 44 L59.500 37.900 L53 37.500 L59.500 37.100Z" fill="#ffdcae" opacity=".9"/>
<path d="M0 10 L24 26.500" stroke="#f2a090" stroke-width="1" opacity=".65"/>
<rect width="330" height="185" fill="url(#pve)"/>
</svg>
<div style="left:1174px;top:518px;width:356px;height:1px;background:#d8d8d8;"></div>
<span class="t" style="top:523.6px;font-size:11px;line-height:16px;right:240.77px;letter-spacing:-0.071px;">Golden Gate Bridge 02.jpg</span>
<span class="t" style="top:544.0px;font-size:11px;line-height:16px;right:241.8px;transform:scaleX(0.9138);transform-origin:right center;">JPEG Image (JPEG YCbCr)</span>
<div style="left:1175px;top:566px;width:329px;height:1px;background:#d0d0d0;"></div>
<div style="left:1175px;top:656px;width:329px;height:1px;background:#d0d0d0;"></div>
<span class="t" style="top:578.0px;font-size:11px;line-height:16px;left:1182.7px;letter-spacing:-0.211px;">Размер изображ</span>
<span class="t" style="top:578.0px;font-size:11px;line-height:16px;left:1264.7px;letter-spacing:-0.178px;">1920 x 1080</span>
<span class="t" style="top:578.0px;font-size:11px;line-height:16px;left:1335px;transform:scaleX(0.927);transform-origin:left center;">Размер файл</span>
<span class="t" style="top:578.0px;font-size:11px;line-height:16px;left:1399px;letter-spacing:-0.209px;">564 776</span>
<span class="t" style="top:603.1px;font-size:11px;line-height:16px;left:1182.7px;letter-spacing:-0.065px;">Пикселей на дю</span>
<span class="t" style="top:603.1px;font-size:11px;line-height:16px;left:1264.5px;letter-spacing:-0.113px;">72 x 72</span>
<span class="t" style="top:603.1px;font-size:11px;line-height:16px;left:1335px;letter-spacing:-0.353px;">Выбранная д</span>
<span class="t" style="top:603.1px;font-size:11px;line-height:16px;left:1399px;letter-spacing:0.099px;">28.11.2021 12:01:40</span>
<span class="t" style="top:627.9px;font-size:11px;line-height:16px;left:1182.7px;letter-spacing:0.031px;">Сжатие:</span>
<span class="t" style="top:627.9px;font-size:11px;line-height:16px;left:1264.2px;transform:scaleX(0.8921);transform-origin:left center;">JPEG, 80</span>
<span class="t" style="top:627.9px;font-size:11px;line-height:16px;left:1335px;letter-spacing:-0.312px;">Camera:</span>
<span class="t" style="top:664.8px;font-size:11px;line-height:16px;left:1182.7px;letter-spacing:-0.059px;">Биты на образец:</span>
<span class="t" style="top:664.8px;font-size:11px;line-height:16px;left:1273.9px;">8</span>
<span class="t" style="top:664.8px;font-size:11px;line-height:16px;left:1335px;letter-spacing:-0.157px;">Страницы</span>
<span class="t" style="top:689.5px;font-size:11px;line-height:16px;left:1182.7px;letter-spacing:-0.125px;">Образцов на пикс</span>
<span class="t" style="top:689.5px;font-size:11px;line-height:16px;left:1273.9px;">3</span>
<span class="t" style="top:689.5px;font-size:11px;line-height:16px;left:1284.6px;letter-spacing:0.302px;">ь:</span>
<span class="t" style="top:689.5px;font-size:11px;line-height:16px;left:1335px;letter-spacing:-0.16px;">Модель цвет</span>
<span class="t" style="top:689.5px;font-size:11px;line-height:16px;left:1399px;transform:scaleX(0.8663);transform-origin:left center;">YCbCr</span>
<span class="t" style="top:714.5px;font-size:11px;line-height:16px;left:1182.7px;">Бит на пиксель:</span>
<span class="t" style="top:714.5px;font-size:11px;line-height:16px;left:1273.9px;letter-spacing:-0.025px;">24</span>
<div style="left:49px;top:843px;width:167px;height:2px;background:#c9c9c9;"></div>
<div style="left:40px;top:833.500px;width:9px;height:20px;border:2px solid #0a7ad8;border-radius:4.500px;background:#fff"></div>
<span class="t" style="top:836.0px;font-size:11px;line-height:16px;left:257.8px;letter-spacing:0.363px;">Элементов:</span>
<span class="t" style="top:836.0px;font-size:11px;line-height:16px;left:334.2px;letter-spacing:-0.225px;">14</span>
<span class="t" style="top:836.3px;font-size:12px;line-height:16px;left:1193px;letter-spacing:-0.103px;">Свяжитесь с нами</span>
<span class="t" style="top:836.3px;font-size:12px;line-height:16px;left:1325px;letter-spacing:-0.086px;">E-mail</span>
<svg style="left:1367px;top:836px" width="16" height="16" viewBox="0 0 16 16"><rect x=".3" y=".3" width="15.400" height="15.400" rx="1.800" fill="#3b5a9a"/><rect x=".8" y=".8" width="14.400" height="7" rx="1.500" fill="#5875b3" opacity=".7"/><path d="M10.200 16 V10 H12.400 L12.800 7.500 H10.200 V6 Q10.200 5 11.400 5 H12.900 V2.700 Q11.900 2.500 10.900 2.500 Q7.700 2.500 7.700 5.700 V7.500 H5.500 V10 H7.700 V16Z" fill="#fff"/></svg>
<span class="t" style="top:836.3px;font-size:12px;line-height:16px;left:1386px;letter-spacing:-0.25px;">Facebook</span>
<svg style="left:1444px;top:836px" width="17" height="16" viewBox="0 0 17 16"><rect x=".5" y=".3" width="16" height="7.700" rx="1.500" fill="#f4f4f4" stroke="#c9c9c9" stroke-width=".5"/><rect x=".5" y="7.500" width="16" height="8.200" rx="1.500" fill="#cd201f"/><text x="8.500" y="6.500" text-anchor="middle" font-size="6.500" font-weight="bold" fill="#222" textLength="11" lengthAdjust="spacingAndGlyphs">You</text><text x="8.500" y="14.200" text-anchor="middle" font-size="6.500" font-weight="bold" fill="#fff" textLength="12" lengthAdjust="spacingAndGlyphs">Tube</text></svg>
<span class="t" style="top:836.3px;font-size:12px;line-height:16px;left:1464.6px;letter-spacing:-0.137px;">YouTube</span>
<svg style="left:1515px;top:847px" width="11" height="9" viewBox="0 0 11 9"><g fill="#7a7a7a"><rect x="8" y="0" width="2" height="2"/><rect x="4" y="3.500" width="2" height="2"/><rect x="8" y="3.500" width="2" height="2"/><rect x="0" y="7" width="2" height="2"/><rect x="4" y="7" width="2" height="2"/><rect x="8" y="7" width="2" height="2"/></g></svg>
<div style="left:362px;top:93px;width:812px;height:638px;background:#fff;border:1px solid #006abd"></div>
<div style="left:362px;top:93px;width:812px;height:32px;background:#006abd;"></div>
<span class="t" style="top:102.0px;font-size:11.5px;line-height:16px;left:368.3px;font-weight:bold;color:#fff;letter-spacing:0.372px;">Отчет</span>
<span class="t" style="top:102.0px;font-size:13px;line-height:16px;left:1100.5px;color:#fff;">?</span>
<svg style="left:1143px;top:102px" width="14" height="14" viewBox="0 0 14 14"><path d="M1.500 1.500 L12.500 12.500 M12.500 1.500 L1.500 12.500" stroke="#fff" stroke-width="1.300"/></svg>
<div style="left:368px;top:125px;width:200px;height:560px;background:#f0f0f0;"></div>
<div style="left:568px;top:125px;width:1px;height:560px;background:#c8c8c8;"></div>
<div style="left:1167px;top:125px;width:1px;height:600px;background:#d0d0d0;"></div>
<div style="left:384px;top:206px;width:184px;height:30px;background:#cce4f7;"></div>
<div style="left:376px;top:206px;width:6px;height:30px;background:#70b5f3;"></div>
<span class="t" style="top:149.5px;font-size:12.5px;line-height:16px;left:392px;color:#1a1a1a;letter-spacing:0.289px;">Тип отчета</span>
<span class="t" style="top:181.5px;font-size:12.5px;line-height:16px;left:392px;color:#1a1a1a;letter-spacing:-0.169px;">Куда</span>
<span class="t" style="top:213.5px;font-size:12.5px;line-height:16px;left:392px;font-weight:bold;color:#1a1a1a;letter-spacing:0.447px;">Столбцы</span>
<span class="t" style="top:245.5px;font-size:12.5px;line-height:16px;left:392px;color:#1a1a1a;letter-spacing:-0.174px;">Просмотр</span>
<span class="t" style="top:277.5px;font-size:12.5px;line-height:16px;left:392px;color:#1a1a1a;letter-spacing:-0.049px;">Размер бумаги</span>
<span class="t" style="top:309.5px;font-size:12.5px;line-height:16px;left:392px;color:#1a1a1a;letter-spacing:-0.035px;">Поля бумаги</span>
<svg style="left:420.5px;top:489px" width="87" height="45" viewBox="0 0 87 45"><path d="M1 13 H18 L24.500 19.500 V43.500 H1Z" fill="#e9f6fc" stroke="#6fc3e6" stroke-width="2"/><path d="M18 13 V19.500 H24.500Z" fill="#6fc3e6"/><path d="M4.500 18 H15 M4.500 20.600 H15 M4.500 23.200 H15 M4.500 25.800 H21 M4.500 37.500 H21 M4.500 40 H21" stroke="#6fc3e6" stroke-width="1.100"/><circle cx="12" cy="31.500" r="3.700" fill="#6fc3e6"/><path d="M12 31.500 V27.800 A3.700 3.700 0 0 1 15.700 31.500Z" fill="#e9f6fc"/><path d="M28 1 H49.500 L58.500 10 V43.500 H28Z" fill="#e9f6fc" stroke="#6fc3e6" stroke-width="2"/><path d="M49.500 1 V10 H58.500Z" fill="#6fc3e6"/><path d="M32.500 7 H45 V19.500 H32.500Z M32.500 10 H45 M32.500 13 H45 M32.500 16.200 H45 M36.700 7 V19.500 M40.900 7 V19.500" fill="none" stroke="#6fc3e6" stroke-width="1"/><path d="M33 40 V33 M35.800 40 V30 M38.600 40 V26 M41.400 40 V34 M44.200 40 V36 M47 40 V31 M49.800 40 V29 M52.600 40 V35" stroke="#6fc3e6" stroke-width="1.700"/><path d="M62.500 13 H79 L85.500 19.500 V43.500 H62.500Z" fill="#e9f6fc" stroke="#6fc3e6" stroke-width="2"/><path d="M79 13 V19.500 H85.500Z" fill="#6fc3e6"/><path d="M66 20 V33.500 H82.500" fill="none" stroke="#6fc3e6" stroke-width="1.100"/><path d="M68 30 L71 26 L73.500 28 L76 24.500 L78 26 L81 22" fill="none" stroke="#6fc3e6" stroke-width="1.100"/><path d="M66 36.500 H73 M75.500 36.500 H82.500 M66 38.800 H73 M75.500 38.800 H82.500 M66 41 H73 M75.500 41 H82.500" stroke="#6fc3e6" stroke-width="1.100"/></svg>
<span class="t" style="top:544.6px;font-size:11.5px;line-height:16px;left:462.7px;font-weight:bold;color:#111;letter-spacing:-0.422px;transform:translateX(-50%);">ХОТИТЕ БОЛЬШЕ</span>
<span class="t" style="top:561.5px;font-size:11.5px;line-height:16px;left:463.1px;font-weight:bold;color:#111;transform:translateX(-50%) scaleX(0.94);">ПОДРОБНЫЕ ОТЧЕТЫ?</span>
<span class="t" style="top:590.0px;font-size:13.5px;line-height:18px;left:418.7px;color:#3f9fd0;letter-spacing:-0.074px;">Print Maestro!</span>
<div style="left:421px;top:630px;width:83px;height:30px;border-radius:15px;background:#f5ab3e"></div>
<span class="t" style="top:636.3px;font-size:13.3px;line-height:18px;left:436.4px;color:#fff;letter-spacing:-0.027px;">Free trial</span>
<svg style="left:583px;top:133px" width="46" height="50" viewBox="0 0 46 50"><defs><filter id="dcf" x="-30%" y="-30%" width="160%" height="160%"><feGaussianBlur stdDeviation="1.2"/></filter></defs><path d="M34 36 L43 31 L44 33 L35 41Z" fill="#555" opacity=".75" filter="url(#dcf)"/><path d="M3 3.500 Q3 1.800 5 2.200 L34.500 8.200 Q36 8.600 36 10.300 L36 44.500 Q36 46.500 34 46 L3.800 40.300 Q2.800 40 2.800 38.500Z" fill="#fbfdff" stroke="#1a1a1a" stroke-width="1.600" stroke-linejoin="round"/><path d="M33.500 10 L35.200 10.500 L35.200 44 L33.500 43.700Z" fill="#8a93a5"/><path d="M4.500 12.0 L33 17.0" stroke="#c4d9ea" stroke-width=".7"/><path d="M4.500 14.8 L33 19.8" stroke="#c4d9ea" stroke-width=".7"/><path d="M4.500 17.6 L33 22.6" stroke="#c4d9ea" stroke-width=".7"/><path d="M4.500 20.4 L33 25.4" stroke="#c4d9ea" stroke-width=".7"/><path d="M4.500 23.2 L33 28.2" stroke="#c4d9ea" stroke-width=".7"/><path d="M4.500 26.0 L33 31.0" stroke="#c4d9ea" stroke-width=".7"/><path d="M4.500 28.8 L33 33.8" stroke="#c4d9ea" stroke-width=".7"/><path d="M4.500 31.6 L33 36.6" stroke="#c4d9ea" stroke-width=".7"/><path d="M4.500 34.4 L33 39.4" stroke="#c4d9ea" stroke-width=".7"/><path d="M4.500 37.2 L33 42.2" stroke="#c4d9ea" stroke-width=".7"/><path d="M4.500 40.0 L33 45.0" stroke="#c4d9ea" stroke-width=".7"/><path d="M4.500 42.8 L33 47.8" stroke="#c4d9ea" stroke-width=".7"/><path d="M5 13.0 L14 14.6 M19 15.4 L22 16.0 M25 16.5 L31 17.6" stroke="#8f979e" stroke-width=".8"/><path d="M5 15.8 L16 17.8 M19 18.2 L22 18.8 M25 19.3 L31 20.4" stroke="#8f979e" stroke-width=".8"/><path d="M5 18.6 L18 20.9 M19 21.0 L22 21.6 M25 22.1 L31 23.2" stroke="#8f979e" stroke-width=".8"/><path d="M5 21.4 L14 23.0 M19 23.8 L22 24.4 M25 24.9 L31 26.0" stroke="#8f979e" stroke-width=".8"/><path d="M5 24.2 L16 26.2 M19 26.6 L22 27.2 M25 27.7 L31 28.8" stroke="#8f979e" stroke-width=".8"/><path d="M5 27.0 L18 29.3 M19 29.4 L22 30.0 M25 30.5 L31 31.6" stroke="#8f979e" stroke-width=".8"/><path d="M5 29.8 L14 31.4 M19 32.2 L22 32.8 M25 33.3 L31 34.4" stroke="#8f979e" stroke-width=".8"/><path d="M5 32.6 L16 34.5 M19 35.0 L22 35.6 M25 36.1 L31 37.2" stroke="#8f979e" stroke-width=".8"/><path d="M12 7.500 L24 9.900" stroke="#333" stroke-width="1"/><path d="M17.500 11 V42.500 M23.500 12 V43.700 M28.500 13 V44.600" stroke="#c4d0da" stroke-width=".6"/></svg>
<span class="t" style="top:146.8px;font-size:16px;line-height:20px;left:638.2px;font-weight:bold;color:#7d7d7d;letter-spacing:0.044px;">Столбцы отчета настройки</span>
<div style="left:576px;top:192px;width:582px;height:20px;background:#fafafa;"></div>
<div style="left:576px;top:211px;width:582px;height:1px;background:#e6e6e6;"></div>
<div style="left:625px;top:192px;width:1px;height:20px;background:#ececec;"></div>
<div style="left:722px;top:192px;width:1px;height:20px;background:#ececec;"></div>
<div style="left:817px;top:192px;width:1px;height:20px;background:#ececec;"></div>
<div style="left:857px;top:192px;width:1px;height:20px;background:#ececec;"></div>
<div style="left:898px;top:192px;width:1px;height:20px;background:#ececec;"></div>
<div style="left:576px;top:212px;width:49px;height:126px;background:#dde9f9;"></div>
<span class="t" style="top:195.0px;font-size:12px;line-height:16px;right:915.6px;transform:scaleX(0.9225);transform-origin:right center;">NN</span>
<span class="t" style="top:195.0px;font-size:12px;line-height:16px;left:632.9px;transform:scaleX(0.9369);transform-origin:left center;">Имя</span>
<span class="t" style="top:195.0px;font-size:12px;line-height:16px;left:728.3px;letter-spacing:0.071px;">Подпись</span>
<span class="t" style="top:195.0px;font-size:12px;line-height:16px;left:828.4px;letter-spacing:0.825px;">Ш...</span>
<span class="t" style="top:195.0px;font-size:12px;line-height:16px;left:864.6px;letter-spacing:0.017px;">По...</span>
<span class="t" style="top:213.7px;font-size:12px;line-height:16px;right:915.6px;">1</span>
<span class="t" style="top:213.7px;font-size:12px;line-height:16px;left:634px;letter-spacing:0.168px;">FileName</span>
<span class="t" style="top:213.7px;font-size:12px;line-height:16px;left:730px;letter-spacing:0.335px;">File name</span>
<span class="t" style="top:213.7px;font-size:12px;line-height:16px;right:683.18px;letter-spacing:0.12px;">64</span>
<span class="t" style="top:231.7px;font-size:12px;line-height:16px;right:915.6px;">2</span>
<span class="t" style="top:231.7px;font-size:12px;line-height:16px;left:634px;letter-spacing:0.43px;">Thumbnail</span>
<span class="t" style="top:231.7px;font-size:12px;line-height:16px;left:730px;letter-spacing:0.43px;">Thumbnail</span>
<span class="t" style="top:231.7px;font-size:12px;line-height:16px;right:683.18px;letter-spacing:0.12px;">96</span>
<span class="t" style="top:249.7px;font-size:12px;line-height:16px;right:915.6px;">3</span>
<span class="t" style="top:249.7px;font-size:12px;line-height:16px;left:634px;letter-spacing:0.481px;">ImageType</span>
<span class="t" style="top:249.7px;font-size:12px;line-height:16px;left:730px;letter-spacing:0.433px;">Image type</span>
<span class="t" style="top:249.7px;font-size:12px;line-height:16px;right:683.18px;letter-spacing:0.12px;">96</span>
<span class="t" style="top:267.7px;font-size:12px;line-height:16px;right:915.6px;">4</span>
<span class="t" style="top:267.7px;font-size:12px;line-height:16px;left:634px;letter-spacing:0.383px;">Width</span>
<span class="t" style="top:267.7px;font-size:12px;line-height:16px;left:730px;letter-spacing:0.383px;">Width</span>
<span class="t" style="top:267.7px;font-size:12px;line-height:16px;right:683.18px;letter-spacing:0.12px;">64</span>
<span class="t" style="top:285.7px;font-size:12px;line-height:16px;right:915.6px;">5</span>
<span class="t" style="top:285.7px;font-size:12px;line-height:16px;left:634px;letter-spacing:0.235px;">Height</span>
<span class="t" style="top:285.7px;font-size:12px;line-height:16px;left:730px;letter-spacing:0.235px;">Height</span>
<span class="t" style="top:285.7px;font-size:12px;line-height:16px;right:683.18px;letter-spacing:0.12px;">64</span>
<span class="t" style="top:303.7px;font-size:12px;line-height:16px;right:915.6px;">6</span>
<span class="t" style="top:303.7px;font-size:12px;line-height:16px;left:634px;letter-spacing:0.18px;">ModifyDate</span>
<span class="t" style="top:303.7px;font-size:12px;line-height:16px;left:730px;letter-spacing:0.341px;">Modify date</span>
<span class="t" style="top:303.7px;font-size:12px;line-height:16px;right:683.18px;letter-spacing:0.12px;">64</span>
<span class="t" style="top:321.7px;font-size:12px;line-height:16px;right:915.6px;">7</span>
<span class="t" style="top:321.7px;font-size:12px;line-height:16px;left:634px;letter-spacing:0.152px;">FileSize</span>
<span class="t" style="top:321.7px;font-size:12px;line-height:16px;left:730px;letter-spacing:0.176px;">File size</span>
<span class="t" style="top:321.7px;font-size:12px;line-height:16px;right:683.18px;letter-spacing:0.12px;">64</span>
<span class="t" style="top:611.6px;font-size:12px;line-height:16px;left:579.3px;letter-spacing:0.145px;">Суммарная ширина512</span>
<div style="left:1052px;top:645px;width:104px;height:25px;background:#ebebeb;overflow:hidden"></div>
<div style="left:1052px;top:645px;width:104px;height:25px;overflow:hidden">
<span class="t" style="top:5.0px;font-size:12px;line-height:16px;left:52.3px;letter-spacing:0.315px;transform:translateX(-50%);">Редактировать столбцы</span>
</div>
<div style="left:368px;top:685px;width:800px;height:40px;background:#1b5f93;"></div>
<div style="left:793px;top:690px;width:78px;height:27px;border:1px solid #5f8db4"></div>
<span class="t" style="top:695.8px;font-size:12px;line-height:16px;left:832.0px;color:#fff;letter-spacing:0.158px;transform:translateX(-50%);">&lt;&lt; Назад</span>
<div style="left:877px;top:690px;width:78px;height:27px;border:1px solid #5f8db4"></div>
<span class="t" style="top:695.8px;font-size:12px;line-height:16px;left:916.0px;color:#fff;letter-spacing:0.597px;transform:translateX(-50%);">Вперед &gt;&gt;</span>
<div style="left:991px;top:690px;width:78px;height:26px;border:1px solid #5f8db4"></div>
<span class="t" style="left:1030.0px;top:695.7px;line-height:16px;font-size:12px;font-weight:bold;color:#fff;transform:translateX(-50%);letter-spacing:.55px"><u>S</u>TART</span>
<div style="left:1075px;top:690px;width:78px;height:27px;border:1px solid #5f8db4"></div>
<span class="t" style="top:695.8px;font-size:12px;line-height:16px;left:1114.0px;color:#fff;letter-spacing:-0.344px;transform:translateX(-50%);">Отмена</span>
</body></html>
